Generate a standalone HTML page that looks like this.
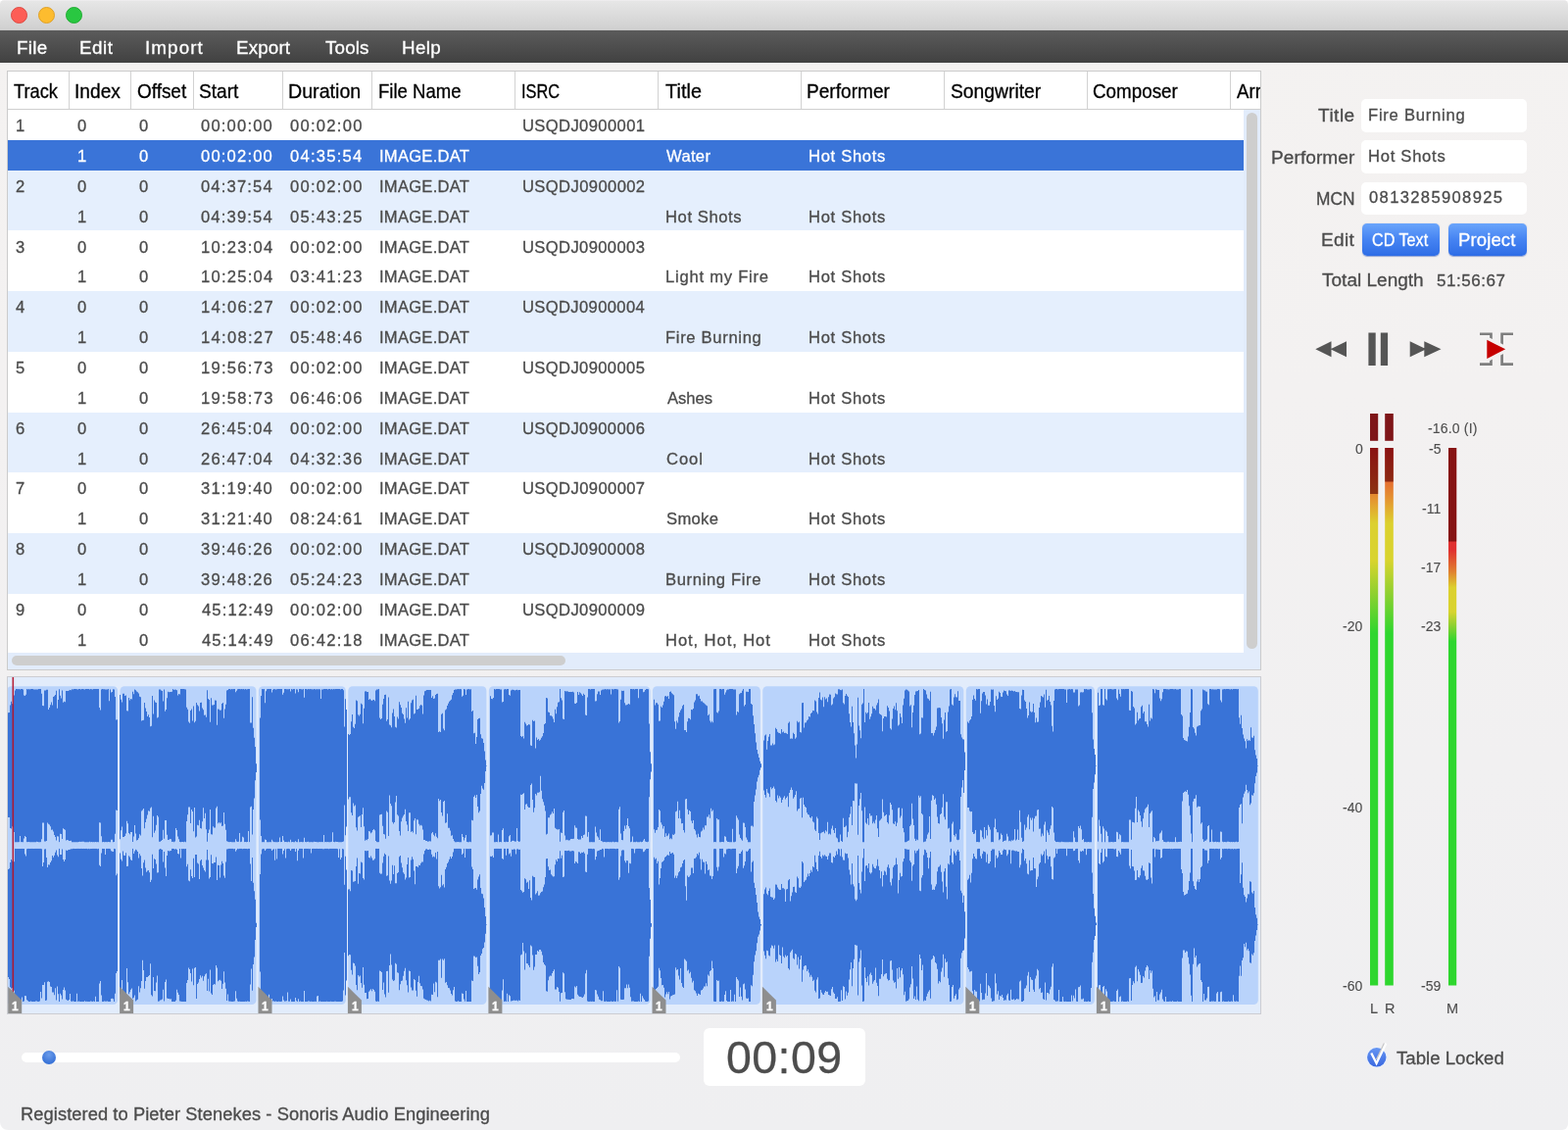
<!DOCTYPE html>
<html lang="en">
<head>
<meta charset="utf-8">
<title>Sonoris DDP Creator</title>
<style>
html,body{margin:0;padding:0;background:#fff;}
body{width:1600px;height:1153px;position:relative;overflow:hidden;font-family:"Liberation Sans",sans-serif;}
#win{will-change:transform;position:absolute;left:0;top:0;width:1600px;height:1153px;overflow:hidden;border-radius:4.5px 4.5px 6px 8px;background:linear-gradient(#f4f2f1 0,#f3f1f1 400px,#efeff1 1153px);}
#titlebar{position:absolute;left:0;top:0;width:1600px;height:31px;background:linear-gradient(#f1eff1 0,#e6e6e6 1.5px,#d0d0d0 30px,#c4c4c4 31px);}
.tl{position:absolute;top:7px;width:17px;height:17px;border-radius:50%;box-sizing:border-box;}
#menubar{position:absolute;left:0;top:31px;width:1600px;height:33px;background:linear-gradient(#5b5b5b,#414141);}
.t{position:absolute;white-space:nowrap;line-height:1;color:#4b4b4b;-webkit-text-stroke:0.3px currentColor;transform-origin:0 0;}
.m{color:#fff;}
.h{color:#000;}
.sel .t{color:#fff;}
.b{color:#fff;}
.k{color:#4e4e4e;-webkit-text-stroke:0.12px currentColor;}
.big{color:#4d4d4d;}
.f{color:#fff;font-weight:bold;}
#table{position:absolute;left:7px;top:72px;width:1280px;height:612px;box-sizing:border-box;border:1px solid #cbcbcb;background:#e2ecfb;overflow:hidden;}
#thead{position:absolute;left:0;top:0;width:1278px;height:38px;background:#fff;border-bottom:1px solid #cfcfcf;}
.hs{position:absolute;top:0;width:1px;height:38px;background:#d2d2d2;}
.row{position:absolute;left:0;width:1261px;background:#fff;}
.row.alt{background:#e5effd;}
.row.sel{background:#3a74d8;}
#vthumb{position:absolute;left:1264px;top:42px;width:10.5px;height:546.5px;border-radius:5.5px;background:#cecece;}
#hbar{position:absolute;left:0;top:593.4px;width:1278px;height:17px;background:#e2ecfb;}
#hthumb{position:absolute;left:4px;top:2.6px;width:565px;height:10.5px;border-radius:5.5px;background:#cecece;}
#wave{position:absolute;left:7px;top:690px;width:1280px;height:345px;box-sizing:border-box;border:1px solid #cccdd2;background:#e2ecfb;overflow:hidden;}
#wave svg{position:absolute;left:-1px;top:-1px;}
.inp{position:absolute;left:1389.3px;width:168.9px;height:33.5px;border-radius:5px;background:#fff;}
.btn{position:absolute;top:227.5px;height:33px;border-radius:5px;background:linear-gradient(#6aa5fb,#4583f2 50%,#2e6de6);box-shadow:0 0.5px 1px rgba(40,80,180,.5);}
#slider{position:absolute;left:21.5px;top:1073.75px;width:672.5px;height:10px;border-radius:5px;background:#fff;}
#knob{position:absolute;left:21.5px;top:-2px;width:14px;height:14px;border-radius:50%;background:radial-gradient(circle at 50% 30%,#6a9bea,#3a74d8 70%);}
#time{position:absolute;left:717.5px;top:1049.25px;width:165px;height:58.25px;border-radius:6px;background:#fff;}
svg.abs{position:absolute;left:0;top:0;}
</style>
</head>
<body>
<div id="win">
<div id="titlebar">
<i class="tl" style="left:11px;background:#fd5e56;border:1px solid #dd4a42"></i>
<i class="tl" style="left:39px;background:#fdbc2f;border:1px solid #dfa127"></i>
<i class="tl" style="left:67px;background:#29c741;border:1px solid #1fac31"></i>
</div>
<div id="menubar" role="menubar">
<span class="t m" role="menuitem" style="left:16.5px;top:9px;font-size:18.8px;letter-spacing:0.321px;transform:translateY(-0.4px) rotate(.001deg);">File</span>
<span class="t m" role="menuitem" style="left:80.7px;top:9px;font-size:18.8px;letter-spacing:0.576px;transform:translateY(-0.4px) rotate(.001deg);">Edit</span>
<span class="t m" role="menuitem" style="left:148.3px;top:9px;font-size:18.8px;letter-spacing:1.109px;transform:translateY(-0.4px) rotate(.001deg);">Import</span>
<span class="t m" role="menuitem" style="left:241px;top:9px;font-size:18.8px;letter-spacing:0.158px;transform:translateY(-0.4px) rotate(.001deg);">Export</span>
<span class="t m" role="menuitem" style="left:331.6px;top:9px;font-size:18.8px;letter-spacing:0.153px;transform:translateY(-0.4px) rotate(.001deg);">Tools</span>
<span class="t m" role="menuitem" style="left:410px;top:9px;font-size:18.8px;letter-spacing:0.364px;transform:translateY(-0.4px) rotate(.001deg);">Help</span>
</div>
<div id="table" role="table">
<div class="row" role="row" style="top:39px;height:30.86px">
<span class="t c" role="cell" style="left:8px;top:9px;font-size:16.6px;transform:translateY(0.2px) rotate(.001deg);">1</span>
<span class="t c" role="cell" style="left:70.9px;top:9px;font-size:16.6px;transform:translateY(0.2px) rotate(.001deg);">0</span>
<span class="t c" role="cell" style="left:133.9px;top:9px;font-size:16.6px;transform:translateY(0.2px) rotate(.001deg);">0</span>
<span class="t c" role="cell" style="left:197.4px;top:9px;font-size:16.6px;letter-spacing:1.174px;transform:translateY(0.2px) rotate(.001deg);">00:00:00</span>
<span class="t c" role="cell" style="left:288.4px;top:9px;font-size:16.6px;letter-spacing:1.259px;transform:translateY(0.2px) rotate(.001deg);">00:02:00</span>
<span class="t c" role="cell" style="left:524.9px;top:9px;font-size:16.6px;letter-spacing:0.377px;transform:translateY(0.2px) rotate(.001deg);">USQDJ0900001</span>
</div>
<div class="row sel" role="row" style="top:69.86px;height:30.86px">
<span class="t c" role="cell" style="left:71.2px;top:9.14px;font-size:16.6px;transform:translateY(0.05px) rotate(.001deg);">1</span>
<span class="t c" role="cell" style="left:133.9px;top:9.14px;font-size:16.6px;transform:translateY(0.05px) rotate(.001deg);">0</span>
<span class="t c" role="cell" style="left:197.4px;top:9.14px;font-size:16.6px;letter-spacing:1.174px;transform:translateY(0.05px) rotate(.001deg);">00:02:00</span>
<span class="t c" role="cell" style="left:288.4px;top:9.14px;font-size:16.6px;letter-spacing:1.231px;transform:translateY(0.05px) rotate(.001deg);">04:35:54</span>
<span class="t c" role="cell" style="left:378.7px;top:9.14px;font-size:16.6px;letter-spacing:0.233px;transform:translateY(0.05px) rotate(.001deg);">IMAGE.DAT</span>
<span class="t c" role="cell" style="left:671.85px;top:9.14px;font-size:16.6px;letter-spacing:0.330px;transform:translateY(0.05px) rotate(.001deg);">Water</span>
<span class="t c" role="cell" style="left:816.9px;top:9.14px;font-size:16.6px;letter-spacing:0.676px;transform:translateY(0.05px) rotate(.001deg);">Hot Shots</span>
</div>
<div class="row alt" role="row" style="top:100.72px;height:30.86px">
<span class="t c" role="cell" style="left:7.8px;top:9.28px;font-size:16.6px;transform:translateY(-0.1px) rotate(.001deg);">2</span>
<span class="t c" role="cell" style="left:70.9px;top:9.28px;font-size:16.6px;transform:translateY(-0.1px) rotate(.001deg);">0</span>
<span class="t c" role="cell" style="left:133.9px;top:9.28px;font-size:16.6px;transform:translateY(-0.1px) rotate(.001deg);">0</span>
<span class="t c" role="cell" style="left:197.4px;top:9.28px;font-size:16.6px;letter-spacing:1.145px;transform:translateY(-0.1px) rotate(.001deg);">04:37:54</span>
<span class="t c" role="cell" style="left:288.4px;top:9.28px;font-size:16.6px;letter-spacing:1.259px;transform:translateY(-0.1px) rotate(.001deg);">00:02:00</span>
<span class="t c" role="cell" style="left:378.7px;top:9.28px;font-size:16.6px;letter-spacing:0.233px;transform:translateY(-0.1px) rotate(.001deg);">IMAGE.DAT</span>
<span class="t c" role="cell" style="left:524.9px;top:9.28px;font-size:16.6px;letter-spacing:0.386px;transform:translateY(-0.1px) rotate(.001deg);">USQDJ0900002</span>
</div>
<div class="row alt" role="row" style="top:131.58px;height:30.86px">
<span class="t c" role="cell" style="left:71.2px;top:9.42px;font-size:16.6px;transform:translateY(-0.25px) rotate(.001deg);">1</span>
<span class="t c" role="cell" style="left:133.9px;top:9.42px;font-size:16.6px;transform:translateY(-0.25px) rotate(.001deg);">0</span>
<span class="t c" role="cell" style="left:197.4px;top:9.42px;font-size:16.6px;letter-spacing:1.145px;transform:translateY(-0.25px) rotate(.001deg);">04:39:54</span>
<span class="t c" role="cell" style="left:288.4px;top:9.42px;font-size:16.6px;letter-spacing:1.259px;transform:translateY(-0.25px) rotate(.001deg);">05:43:25</span>
<span class="t c" role="cell" style="left:378.7px;top:9.42px;font-size:16.6px;letter-spacing:0.233px;transform:translateY(-0.25px) rotate(.001deg);">IMAGE.DAT</span>
<span class="t c" role="cell" style="left:671.3px;top:9.42px;font-size:16.6px;letter-spacing:0.595px;transform:translateY(-0.25px) rotate(.001deg);">Hot Shots</span>
<span class="t c" role="cell" style="left:816.9px;top:9.42px;font-size:16.6px;letter-spacing:0.676px;transform:translateY(-0.25px) rotate(.001deg);">Hot Shots</span>
</div>
<div class="row" role="row" style="top:162.44px;height:30.86px">
<span class="t c" role="cell" style="left:8px;top:9.56px;font-size:16.6px;transform:translateY(-0.4px) rotate(.001deg);">3</span>
<span class="t c" role="cell" style="left:70.9px;top:9.56px;font-size:16.6px;transform:translateY(-0.4px) rotate(.001deg);">0</span>
<span class="t c" role="cell" style="left:133.9px;top:9.56px;font-size:16.6px;transform:translateY(-0.4px) rotate(.001deg);">0</span>
<span class="t c" role="cell" style="left:196.8px;top:9.56px;font-size:16.6px;letter-spacing:1.231px;transform:translateY(-0.4px) rotate(.001deg);">10:23:04</span>
<span class="t c" role="cell" style="left:288.4px;top:9.56px;font-size:16.6px;letter-spacing:1.259px;transform:translateY(-0.4px) rotate(.001deg);">00:02:00</span>
<span class="t c" role="cell" style="left:378.7px;top:9.56px;font-size:16.6px;letter-spacing:0.233px;transform:translateY(-0.4px) rotate(.001deg);">IMAGE.DAT</span>
<span class="t c" role="cell" style="left:524.9px;top:9.56px;font-size:16.6px;letter-spacing:0.368px;transform:translateY(-0.4px) rotate(.001deg);">USQDJ0900003</span>
</div>
<div class="row" role="row" style="top:193.3px;height:30.86px">
<span class="t c" role="cell" style="left:71.2px;top:8.7px;font-size:16.6px;transform:translateY(0.45px) rotate(.001deg);">1</span>
<span class="t c" role="cell" style="left:133.9px;top:8.7px;font-size:16.6px;transform:translateY(0.45px) rotate(.001deg);">0</span>
<span class="t c" role="cell" style="left:196.8px;top:8.7px;font-size:16.6px;letter-spacing:1.231px;transform:translateY(0.45px) rotate(.001deg);">10:25:04</span>
<span class="t c" role="cell" style="left:288.4px;top:8.7px;font-size:16.6px;letter-spacing:1.259px;transform:translateY(0.45px) rotate(.001deg);">03:41:23</span>
<span class="t c" role="cell" style="left:378.7px;top:8.7px;font-size:16.6px;letter-spacing:0.233px;transform:translateY(0.45px) rotate(.001deg);">IMAGE.DAT</span>
<span class="t c" role="cell" style="left:671.3px;top:8.7px;font-size:16.6px;letter-spacing:0.758px;transform:translateY(0.45px) rotate(.001deg);">Light my Fire</span>
<span class="t c" role="cell" style="left:816.9px;top:8.7px;font-size:16.6px;letter-spacing:0.676px;transform:translateY(0.45px) rotate(.001deg);">Hot Shots</span>
</div>
<div class="row alt" role="row" style="top:224.16px;height:30.86px">
<span class="t c" role="cell" style="left:8.3px;top:8.84px;font-size:16.6px;transform:translateY(0.3px) rotate(.001deg);">4</span>
<span class="t c" role="cell" style="left:70.9px;top:8.84px;font-size:16.6px;transform:translateY(0.3px) rotate(.001deg);">0</span>
<span class="t c" role="cell" style="left:133.9px;top:8.84px;font-size:16.6px;transform:translateY(0.3px) rotate(.001deg);">0</span>
<span class="t c" role="cell" style="left:196.8px;top:8.84px;font-size:16.6px;letter-spacing:1.288px;transform:translateY(0.3px) rotate(.001deg);">14:06:27</span>
<span class="t c" role="cell" style="left:288.4px;top:8.84px;font-size:16.6px;letter-spacing:1.259px;transform:translateY(0.3px) rotate(.001deg);">00:02:00</span>
<span class="t c" role="cell" style="left:378.7px;top:8.84px;font-size:16.6px;letter-spacing:0.233px;transform:translateY(0.3px) rotate(.001deg);">IMAGE.DAT</span>
<span class="t c" role="cell" style="left:524.9px;top:8.84px;font-size:16.6px;letter-spacing:0.350px;transform:translateY(0.3px) rotate(.001deg);">USQDJ0900004</span>
</div>
<div class="row alt" role="row" style="top:255.02px;height:30.86px">
<span class="t c" role="cell" style="left:71.2px;top:8.98px;font-size:16.6px;transform:translateY(0.15px) rotate(.001deg);">1</span>
<span class="t c" role="cell" style="left:133.9px;top:8.98px;font-size:16.6px;transform:translateY(0.15px) rotate(.001deg);">0</span>
<span class="t c" role="cell" style="left:196.8px;top:8.98px;font-size:16.6px;letter-spacing:1.288px;transform:translateY(0.15px) rotate(.001deg);">14:08:27</span>
<span class="t c" role="cell" style="left:288.4px;top:8.98px;font-size:16.6px;letter-spacing:1.259px;transform:translateY(0.15px) rotate(.001deg);">05:48:46</span>
<span class="t c" role="cell" style="left:378.7px;top:8.98px;font-size:16.6px;letter-spacing:0.233px;transform:translateY(0.15px) rotate(.001deg);">IMAGE.DAT</span>
<span class="t c" role="cell" style="left:671.3px;top:8.98px;font-size:16.6px;letter-spacing:0.674px;transform:translateY(0.15px) rotate(.001deg);">Fire Burning</span>
<span class="t c" role="cell" style="left:816.9px;top:8.98px;font-size:16.6px;letter-spacing:0.676px;transform:translateY(0.15px) rotate(.001deg);">Hot Shots</span>
</div>
<div class="row" role="row" style="top:285.88px;height:30.86px">
<span class="t c" role="cell" style="left:8px;top:9.12px;font-size:16.6px;transform:translateY(0px) rotate(.001deg);">5</span>
<span class="t c" role="cell" style="left:70.9px;top:9.12px;font-size:16.6px;transform:translateY(0px) rotate(.001deg);">0</span>
<span class="t c" role="cell" style="left:133.9px;top:9.12px;font-size:16.6px;transform:translateY(0px) rotate(.001deg);">0</span>
<span class="t c" role="cell" style="left:196.8px;top:9.12px;font-size:16.6px;letter-spacing:1.259px;transform:translateY(0px) rotate(.001deg);">19:56:73</span>
<span class="t c" role="cell" style="left:288.4px;top:9.12px;font-size:16.6px;letter-spacing:1.259px;transform:translateY(0px) rotate(.001deg);">00:02:00</span>
<span class="t c" role="cell" style="left:378.7px;top:9.12px;font-size:16.6px;letter-spacing:0.233px;transform:translateY(0px) rotate(.001deg);">IMAGE.DAT</span>
<span class="t c" role="cell" style="left:524.9px;top:9.12px;font-size:16.6px;letter-spacing:0.368px;transform:translateY(0px) rotate(.001deg);">USQDJ0900005</span>
</div>
<div class="row" role="row" style="top:316.74px;height:30.86px">
<span class="t c" role="cell" style="left:71.2px;top:9.26px;font-size:16.6px;transform:translateY(-0.15px) rotate(.001deg);">1</span>
<span class="t c" role="cell" style="left:133.9px;top:9.26px;font-size:16.6px;transform:translateY(-0.15px) rotate(.001deg);">0</span>
<span class="t c" role="cell" style="left:196.8px;top:9.26px;font-size:16.6px;letter-spacing:1.259px;transform:translateY(-0.15px) rotate(.001deg);">19:58:73</span>
<span class="t c" role="cell" style="left:288.4px;top:9.26px;font-size:16.6px;letter-spacing:1.259px;transform:translateY(-0.15px) rotate(.001deg);">06:46:06</span>
<span class="t c" role="cell" style="left:378.7px;top:9.26px;font-size:16.6px;letter-spacing:0.233px;transform:translateY(-0.15px) rotate(.001deg);">IMAGE.DAT</span>
<span class="t c" role="cell" style="left:672.6px;top:9.26px;font-size:16.6px;transform:translateY(-0.15px) rotate(.001deg) scaleX(0.9992);">Ashes</span>
<span class="t c" role="cell" style="left:816.9px;top:9.26px;font-size:16.6px;letter-spacing:0.676px;transform:translateY(-0.15px) rotate(.001deg);">Hot Shots</span>
</div>
<div class="row alt" role="row" style="top:347.6px;height:30.86px">
<span class="t c" role="cell" style="left:7.8px;top:9.4px;font-size:16.6px;transform:translateY(-0.3px) rotate(.001deg);">6</span>
<span class="t c" role="cell" style="left:70.9px;top:9.4px;font-size:16.6px;transform:translateY(-0.3px) rotate(.001deg);">0</span>
<span class="t c" role="cell" style="left:133.9px;top:9.4px;font-size:16.6px;transform:translateY(-0.3px) rotate(.001deg);">0</span>
<span class="t c" role="cell" style="left:197.2px;top:9.4px;font-size:16.6px;letter-spacing:1.174px;transform:translateY(-0.3px) rotate(.001deg);">26:45:04</span>
<span class="t c" role="cell" style="left:288.4px;top:9.4px;font-size:16.6px;letter-spacing:1.259px;transform:translateY(-0.3px) rotate(.001deg);">00:02:00</span>
<span class="t c" role="cell" style="left:378.7px;top:9.4px;font-size:16.6px;letter-spacing:0.233px;transform:translateY(-0.3px) rotate(.001deg);">IMAGE.DAT</span>
<span class="t c" role="cell" style="left:524.9px;top:9.4px;font-size:16.6px;letter-spacing:0.368px;transform:translateY(-0.3px) rotate(.001deg);">USQDJ0900006</span>
</div>
<div class="row alt" role="row" style="top:378.46px;height:30.86px">
<span class="t c" role="cell" style="left:71.2px;top:9.54px;font-size:16.6px;transform:translateY(-0.45px) rotate(.001deg);">1</span>
<span class="t c" role="cell" style="left:133.9px;top:9.54px;font-size:16.6px;transform:translateY(-0.45px) rotate(.001deg);">0</span>
<span class="t c" role="cell" style="left:197.2px;top:9.54px;font-size:16.6px;letter-spacing:1.174px;transform:translateY(-0.45px) rotate(.001deg);">26:47:04</span>
<span class="t c" role="cell" style="left:288.4px;top:9.54px;font-size:16.6px;letter-spacing:1.259px;transform:translateY(-0.45px) rotate(.001deg);">04:32:36</span>
<span class="t c" role="cell" style="left:378.7px;top:9.54px;font-size:16.6px;letter-spacing:0.233px;transform:translateY(-0.45px) rotate(.001deg);">IMAGE.DAT</span>
<span class="t c" role="cell" style="left:671.8px;top:9.54px;font-size:16.6px;letter-spacing:0.916px;transform:translateY(-0.45px) rotate(.001deg);">Cool</span>
<span class="t c" role="cell" style="left:816.9px;top:9.54px;font-size:16.6px;letter-spacing:0.676px;transform:translateY(-0.45px) rotate(.001deg);">Hot Shots</span>
</div>
<div class="row" role="row" style="top:409.32px;height:30.86px">
<span class="t c" role="cell" style="left:7.8px;top:8.68px;font-size:16.6px;transform:translateY(0.4px) rotate(.001deg);">7</span>
<span class="t c" role="cell" style="left:70.9px;top:8.68px;font-size:16.6px;transform:translateY(0.4px) rotate(.001deg);">0</span>
<span class="t c" role="cell" style="left:133.9px;top:8.68px;font-size:16.6px;transform:translateY(0.4px) rotate(.001deg);">0</span>
<span class="t c" role="cell" style="left:197.4px;top:8.68px;font-size:16.6px;letter-spacing:1.174px;transform:translateY(0.4px) rotate(.001deg);">31:19:40</span>
<span class="t c" role="cell" style="left:288.4px;top:8.68px;font-size:16.6px;letter-spacing:1.259px;transform:translateY(0.4px) rotate(.001deg);">00:02:00</span>
<span class="t c" role="cell" style="left:378.7px;top:8.68px;font-size:16.6px;letter-spacing:0.233px;transform:translateY(0.4px) rotate(.001deg);">IMAGE.DAT</span>
<span class="t c" role="cell" style="left:524.9px;top:8.68px;font-size:16.6px;letter-spacing:0.386px;transform:translateY(0.4px) rotate(.001deg);">USQDJ0900007</span>
</div>
<div class="row" role="row" style="top:440.18px;height:30.86px">
<span class="t c" role="cell" style="left:71.2px;top:8.82px;font-size:16.6px;transform:translateY(0.25px) rotate(.001deg);">1</span>
<span class="t c" role="cell" style="left:133.9px;top:8.82px;font-size:16.6px;transform:translateY(0.25px) rotate(.001deg);">0</span>
<span class="t c" role="cell" style="left:197.4px;top:8.82px;font-size:16.6px;letter-spacing:1.174px;transform:translateY(0.25px) rotate(.001deg);">31:21:40</span>
<span class="t c" role="cell" style="left:288.4px;top:8.82px;font-size:16.6px;letter-spacing:1.274px;transform:translateY(0.25px) rotate(.001deg);">08:24:61</span>
<span class="t c" role="cell" style="left:378.7px;top:8.82px;font-size:16.6px;letter-spacing:0.233px;transform:translateY(0.25px) rotate(.001deg);">IMAGE.DAT</span>
<span class="t c" role="cell" style="left:671.9px;top:8.82px;font-size:16.6px;letter-spacing:0.317px;transform:translateY(0.25px) rotate(.001deg);">Smoke</span>
<span class="t c" role="cell" style="left:816.9px;top:8.82px;font-size:16.6px;letter-spacing:0.676px;transform:translateY(0.25px) rotate(.001deg);">Hot Shots</span>
</div>
<div class="row alt" role="row" style="top:471.04px;height:30.86px">
<span class="t c" role="cell" style="left:7.9px;top:8.96px;font-size:16.6px;transform:translateY(0.1px) rotate(.001deg);">8</span>
<span class="t c" role="cell" style="left:70.9px;top:8.96px;font-size:16.6px;transform:translateY(0.1px) rotate(.001deg);">0</span>
<span class="t c" role="cell" style="left:133.9px;top:8.96px;font-size:16.6px;transform:translateY(0.1px) rotate(.001deg);">0</span>
<span class="t c" role="cell" style="left:197.4px;top:8.96px;font-size:16.6px;letter-spacing:1.174px;transform:translateY(0.1px) rotate(.001deg);">39:46:26</span>
<span class="t c" role="cell" style="left:288.4px;top:8.96px;font-size:16.6px;letter-spacing:1.259px;transform:translateY(0.1px) rotate(.001deg);">00:02:00</span>
<span class="t c" role="cell" style="left:378.7px;top:8.96px;font-size:16.6px;letter-spacing:0.233px;transform:translateY(0.1px) rotate(.001deg);">IMAGE.DAT</span>
<span class="t c" role="cell" style="left:524.9px;top:8.96px;font-size:16.6px;letter-spacing:0.368px;transform:translateY(0.1px) rotate(.001deg);">USQDJ0900008</span>
</div>
<div class="row alt" role="row" style="top:501.9px;height:30.86px">
<span class="t c" role="cell" style="left:71.2px;top:9.1px;font-size:16.6px;transform:translateY(-0.05px) rotate(.001deg);">1</span>
<span class="t c" role="cell" style="left:133.9px;top:9.1px;font-size:16.6px;transform:translateY(-0.05px) rotate(.001deg);">0</span>
<span class="t c" role="cell" style="left:197.4px;top:9.1px;font-size:16.6px;letter-spacing:1.174px;transform:translateY(-0.05px) rotate(.001deg);">39:48:26</span>
<span class="t c" role="cell" style="left:288.4px;top:9.1px;font-size:16.6px;letter-spacing:1.259px;transform:translateY(-0.05px) rotate(.001deg);">05:24:23</span>
<span class="t c" role="cell" style="left:378.7px;top:9.1px;font-size:16.6px;letter-spacing:0.233px;transform:translateY(-0.05px) rotate(.001deg);">IMAGE.DAT</span>
<span class="t c" role="cell" style="left:671.3px;top:9.1px;font-size:16.6px;letter-spacing:0.647px;transform:translateY(-0.05px) rotate(.001deg);">Burning Fire</span>
<span class="t c" role="cell" style="left:816.9px;top:9.1px;font-size:16.6px;letter-spacing:0.676px;transform:translateY(-0.05px) rotate(.001deg);">Hot Shots</span>
</div>
<div class="row" role="row" style="top:532.76px;height:30.86px">
<span class="t c" role="cell" style="left:7.9px;top:9.24px;font-size:16.6px;transform:translateY(-0.2px) rotate(.001deg);">9</span>
<span class="t c" role="cell" style="left:70.9px;top:9.24px;font-size:16.6px;transform:translateY(-0.2px) rotate(.001deg);">0</span>
<span class="t c" role="cell" style="left:133.9px;top:9.24px;font-size:16.6px;transform:translateY(-0.2px) rotate(.001deg);">0</span>
<span class="t c" role="cell" style="left:197.7px;top:9.24px;font-size:16.6px;letter-spacing:1.145px;transform:translateY(-0.2px) rotate(.001deg);">45:12:49</span>
<span class="t c" role="cell" style="left:288.4px;top:9.24px;font-size:16.6px;letter-spacing:1.259px;transform:translateY(-0.2px) rotate(.001deg);">00:02:00</span>
<span class="t c" role="cell" style="left:378.7px;top:9.24px;font-size:16.6px;letter-spacing:0.233px;transform:translateY(-0.2px) rotate(.001deg);">IMAGE.DAT</span>
<span class="t c" role="cell" style="left:524.9px;top:9.24px;font-size:16.6px;letter-spacing:0.377px;transform:translateY(-0.2px) rotate(.001deg);">USQDJ0900009</span>
</div>
<div class="row" role="row" style="top:563.62px;height:30.86px">
<span class="t c" role="cell" style="left:71.2px;top:9.38px;font-size:16.6px;transform:translateY(-0.35px) rotate(.001deg);">1</span>
<span class="t c" role="cell" style="left:133.9px;top:9.38px;font-size:16.6px;transform:translateY(-0.35px) rotate(.001deg);">0</span>
<span class="t c" role="cell" style="left:197.7px;top:9.38px;font-size:16.6px;letter-spacing:1.145px;transform:translateY(-0.35px) rotate(.001deg);">45:14:49</span>
<span class="t c" role="cell" style="left:288.4px;top:9.38px;font-size:16.6px;letter-spacing:1.259px;transform:translateY(-0.35px) rotate(.001deg);">06:42:18</span>
<span class="t c" role="cell" style="left:378.7px;top:9.38px;font-size:16.6px;letter-spacing:0.233px;transform:translateY(-0.35px) rotate(.001deg);">IMAGE.DAT</span>
<span class="t c" role="cell" style="left:671.3px;top:9.38px;font-size:16.6px;letter-spacing:0.914px;transform:translateY(-0.35px) rotate(.001deg);">Hot, Hot, Hot</span>
<span class="t c" role="cell" style="left:816.9px;top:9.38px;font-size:16.6px;letter-spacing:0.676px;transform:translateY(-0.35px) rotate(.001deg);">Hot Shots</span>
</div>
<div id="thead" role="row">
<i class="hs" style="left:62px"></i>
<i class="hs" style="left:125px"></i>
<i class="hs" style="left:189px"></i>
<i class="hs" style="left:280px"></i>
<i class="hs" style="left:371px"></i>
<i class="hs" style="left:517px"></i>
<i class="hs" style="left:663px"></i>
<i class="hs" style="left:809px"></i>
<i class="hs" style="left:955px"></i>
<i class="hs" style="left:1101px"></i>
<i class="hs" style="left:1247px"></i>
<span class="t h" role="columnheader" style="left:6.13px;top:11px;font-size:19.8px;transform:translateY(-0.4px) rotate(.001deg) scaleX(0.9233);">Track</span>
<span class="t h" role="columnheader" style="left:68.26px;top:11px;font-size:19.8px;transform:translateY(-0.4px) rotate(.001deg) scaleX(0.9691);">Index</span>
<span class="t h" role="columnheader" style="left:131.89px;top:11px;font-size:19.8px;transform:translateY(-0.4px) rotate(.001deg) scaleX(0.9571);">Offset</span>
<span class="t h" role="columnheader" style="left:195.48px;top:11px;font-size:19.8px;transform:translateY(-0.4px) rotate(.001deg) scaleX(0.9655);">Start</span>
<span class="t h" role="columnheader" style="left:285.91px;top:11px;font-size:19.8px;transform:translateY(-0.4px) rotate(.001deg) scaleX(0.9927);">Duration</span>
<span class="t h" role="columnheader" style="left:377.5px;top:11px;font-size:19.8px;transform:translateY(-0.4px) rotate(.001deg) scaleX(0.9367);">File Name</span>
<span class="t h" role="columnheader" style="left:523.51px;top:11px;font-size:19.8px;transform:translateY(-0.4px) rotate(.001deg) scaleX(0.8258);">ISRC</span>
<span class="t h" role="columnheader" style="left:670.85px;top:11px;font-size:19.8px;letter-spacing:0.073px;transform:translateY(-0.4px) rotate(.001deg);">Title</span>
<span class="t h" role="columnheader" style="left:815.45px;top:11px;font-size:19.8px;transform:translateY(-0.4px) rotate(.001deg) scaleX(0.9661);">Performer</span>
<span class="t h" role="columnheader" style="left:961.97px;top:11px;font-size:19.8px;transform:translateY(-0.4px) rotate(.001deg) scaleX(0.9755);">Songwriter</span>
<span class="t h" role="columnheader" style="left:1107.3px;top:11px;font-size:19.8px;transform:translateY(-0.4px) rotate(.001deg) scaleX(0.9512);">Composer</span>
<span class="t h" role="columnheader" style="left:1253.9px;top:11px;font-size:19.8px;transform:translateY(-0.4px) rotate(.001deg) scaleX(0.9434);">Arranger</span>
</div>
<div id="hbar"><div id="hthumb"></div></div>
<div id="vthumb"></div>
</div>
<div id="wave">
<svg width="1280" height="345" viewBox="7 690 1280 345">
<defs><clipPath id="wc"><rect x="5.00" y="703.1" width="115.00" height="156.3" rx="2.5"/><rect x="5.00" y="865.7" width="115.00" height="156.3" rx="2.5"/><rect x="122.00" y="703.1" width="140.00" height="156.3" rx="2.5"/><rect x="122.00" y="865.7" width="140.00" height="156.3" rx="2.5"/><rect x="265.00" y="703.1" width="89.00" height="156.3" rx="2.5"/><rect x="265.00" y="865.7" width="89.00" height="156.3" rx="2.5"/><rect x="355.00" y="703.1" width="142.00" height="156.3" rx="2.5"/><rect x="355.00" y="865.7" width="142.00" height="156.3" rx="2.5"/><rect x="500.00" y="703.1" width="165.00" height="156.3" rx="2.5"/><rect x="500.00" y="865.7" width="165.00" height="156.3" rx="2.5"/><rect x="667.00" y="703.1" width="110.00" height="156.3" rx="2.5"/><rect x="667.00" y="865.7" width="110.00" height="156.3" rx="2.5"/><rect x="779.00" y="703.1" width="206.00" height="156.3" rx="2.5"/><rect x="779.00" y="865.7" width="206.00" height="156.3" rx="2.5"/><rect x="987.00" y="703.1" width="132.00" height="156.3" rx="2.5"/><rect x="987.00" y="865.7" width="132.00" height="156.3" rx="2.5"/><rect x="1120.00" y="703.1" width="164.00" height="156.3" rx="2.5"/><rect x="1120.00" y="865.7" width="164.00" height="156.3" rx="2.5"/></clipPath></defs>
<g fill="#b9d3fb"><rect x="7.00" y="700.3" width="113.09" height="324.7" rx="4.5"/><rect x="122.51" y="700.3" width="138.95" height="324.7" rx="4.5"/><rect x="263.89" y="700.3" width="89.00" height="324.7" rx="4.5"/><rect x="355.30" y="700.3" width="141.12" height="324.7" rx="4.5"/><rect x="498.84" y="700.3" width="164.64" height="324.7" rx="4.5"/><rect x="665.90" y="700.3" width="109.95" height="324.7" rx="4.5"/><rect x="778.26" y="700.3" width="205.06" height="324.7" rx="4.5"/><rect x="985.74" y="700.3" width="131.17" height="324.7" rx="4.5"/><rect x="1119.33" y="700.3" width="164.47" height="324.7" rx="4.5"/></g>
<g fill="#3973d7" clip-path="url(#wc)"><path d="M8 781.2V727.3H9V727.1H10V719.6H11V715.8H12V718.1H13V718.6H14V709.4H15V704.5H16V703.1H17H18V703.2H19V703.1H20V703.6H21V703.1H22H23V703.4H24V709.5H25V710H26V708.7H27V703.1H28V703.5H29V703.1H30V703.4H31V703.1H32H33H34V703.6H35V703.5H36V703.4H37V703.6H38V703.4H39V703.1H40H41H42V707.8H43V720H44V720.3H45V704.5H46H47V703.7H48V703.8H49V724.1H50V722.1H51V719.2H52V716.5H53V719.5H54V710.9H55V710.2H56V708.9H57V704.7H58V722.7H59V713.9H60V703.3H61V709.7H62V712.4H63V704.4H64V716.7H65V715.8H66V716.3H67V705.1H68V705H69V704.9H70V704.5H71V703.9H72V704.3H73V703.3H74V703.5H75V703.1H76H77H78V703.3H79V703.4H80V703.1H81H82V703.4H83V703.1H84H85V703.2H86V703.4H87V703.1H88H89H90H91V703.4H92V703.1H93V703.2H94V703.5H95V703.1H96H97H98H99H100H101V721.9H102V724.4H103V703.5H104V703.1H105V703.3H106H107V703.6H108V703.4H109H110V703.1H111V715.2H112V703.4H113V706.4H114V706.1H115V703.3H116V703.5H117V710.9H118V734.5H119V734.3H120V827.1H119V826.5H118V850.7H117V859.1H116V859.4H115V856.7H114V856.8H113V859.4H112V859.3H111V858.9H110V859.4H109V859.3H108V859.2H107V859.4H106V859H105V859.4H104V853.3H103V839.5H102V839.2H101V859.4H100V859.2H99V859.4H98V858.9H97V859.4H96V859.3H95V859.4H94V859H93V859.4H92V858.7H91V859.4H90H89H88H87H86V858.8H85H84H83V858.9H82V858.8H81V858.9H80V859.4H79H78H77H76H75H74H73V857.8H72V858H71V857.9H70V857.2H69V857.1H68V857.6H67V846.8H66V845.9H65V845.2H64V856H63V851.1H62V850.7H61V859.2H60V853.6H59V853.3H58V857.6H57V854H56V851.9H55V848.4H54V846.6H53V846.8H52V843.2H51V841.5H50V840.7H49V839.6H48V858.1H47V858.5H46V858.6H45V839.4H44V839.5H43V856.2H42V859.3H41V859.4H40H39V859.1H38V858.8H37V859.4H36H35H34H33H32H31H30V859.1H29V859.3H28V859.2H27V853.9H26V852.9H25V855.5H24V859.4H23V859.2H22H21V853.1H20V859.2H19V859.4H18H17H16H15V849.1H14V844.1H13V843.3H12V845.4H11V845.1H10V833.9H9H8Z"/>
<path d="M8 943.9V886.9H9V886.2H10V879.9H11V877H12V878.5H13V876.9H14V879.2H15V865.8H16V866.1H17H18V866H19V865.9H20H21V866.1H22V865.7H23V865.9H24V866H25V871.6H26V873.6H27V866.2H28V865.7H29H30V866H31V865.7H32H33H34V866.1H35V865.7H36H37H38V865.8H39V865.7H40H41H42V866.2H43V883.9H44V879.9H45V866.4H46V866.3H47V875H48V885H49V882.2H50V882.6H51V880.1H52V878.3H53V873.1H54V874.7H55V872.8H56V869.7H57V867.5H58V872.5H59V874.3H60V865.7H61V872.1H62V872H63V866.4H64V876.9H65V878.9H66V876.9H67V867.5H68V867.9H69V867.3H70V867H71V866.7H72V866.3H73H74V865.7H75H76V866H77V866.1H78V865.7H79H80H81V866.1H82V865.7H83H84V866.1H85V865.7H86V865.9H87V865.7H88V865.8H89V866.2H90V865.7H91V866.3H92V866.1H93V865.9H94V865.7H95H96H97H98V865.8H99V866.2H100V865.8H101V882.8H102V884H103V870.4H104V865.7H105V865.9H106V866H107V872.1H108V865.7H109H110V865.8H111V865.7H112V866.3H113V868.3H114V868.7H115V869.1H116V865.7H117V866.2H118V893.3H119V891.6H120V991H119V992.9H118V1013.8H117V1021.9H116V1019.2H115V1018.8H114V1019.1H113V1022H112H111H110V1021.5H109V1021.8H108H107V1021.6H106V1022H105H104V1015.4H103V1001.1H102V1003.6H101V1022H100V1021.9H99V1022H98V1016.8H97V1022H96V1021.5H95V1022H94V1021.7H93V1021.4H92V1022H91H90H89V1021.7H88V1022H87V1021.3H86V1022H85H84H83H82H81V1021.5H80V1022H79V1013.8H78V1022H77H76H75V1021.3H74V1022H73V1021.5H72V1014H71V1020H70V1021.1H69V1020.4H68V1019.7H67V1010.5H66V1007.6H65V1010H64V1019.5H63V1015.6H62V1013.8H61V1022H60V1014.3H59V1006.6H58V1020.4H57V1008.3H56V1015.2H55V1012.4H54V1012.5H53V1007H52V1006.6H51V1002H50V1001.3H49V1001.8H48V1020.4H47V1021.1H46V1002.3H45V1005H44V1004.9H43V1018.6H42V1012H41V1021.4H40V1022H39H38V1021.5H37V1021.6H36V1022H35H34H33H32V1021.5H31V1022H30H29V1021.3H28V1020.3H27V1016.3H26V1015.9H25V1021.4H24V1022H23V1017.6H22V1021.6H21V1022H20H19H18V1021.5H17V1022H16V1021.5H15V1010.7H14V1008.5H13V1007.9H12V1008.5H11V1007.2H10V998.9H9V997H8Z"/>
<path d="M122 781.2V709.1H123V713.7H124V716.4H125V707.7H126V707.8H127V709.9H128V709.4H129V725.2H130V725.4H131V712H132V714.5H133V713.1H134V713.4H135V705.8H136V708.3H137V703.4H138V704.2H139V705.4H140V706.2H141V707.4H142V710.7H143V711.2H144V735.5H145V734.9H146V734.8H147V716.9H148V722.6H149V725.9H150V731H151V729.3H152V732.1H153V741.2H154V740.8H155V710.1H156V728.6H157V714.5H158V716.6H159V717.1H160V732.5H161V731.8H162V703.5H163V703.6H164V704.6H165V704.9H166V715.4H167V703.4H168V725.7H169V724H170V712.2H171V705.7H172V706.2H173V705.9H174V706H175V705.7H176V703.1H177V704H178V703.6H179V703.7H180V704.2H181V709.5H182V707.9H183V708.5H184V703.1H185H186H187H188V703.3H189V703.4H190V721.8H191V723.8H192V736.6H193V737.7H194V725.1H195V723.6H196V735.5H197V720.6H198V737.2H199V735.8H200V716.9H201V719.2H202V720.4H203V725.5H204V716.9H205V716.8H206V722.5H207V724.3H208V729.8H209V729.5H210V731.8H211V704.2H212V712.9H213V714H214V736.7H215V712.3H216V719.5H217V719.4H218V719H219V714.5H220V714.8H221V739.7H222V723.4H223V723.8H224V724.8H225V724.5H226V718H227V717.1H228V732.7H229V723.5H230V718.8H231V704.5H232V704H233V703.1H234H235V703.4H236V703.1H237V703.2H238V703.1H239H240V706.2H241V704.8H242V703.3H243V703.1H244H245V703.3H246V703.1H247V703.2H248V703.1H249V703.5H250V703.1H251V703.5H252V703.3H253V703.1H254H255V737.4H256H257V711.3H258V742.7H259V752.8H260V761.9H261V779.2H262V787.9H261V796.3H260V814.4H259V825.9H258V851.5H257V822.7H256V823.6H255V859.3H254V847.9H253V859H252V859.4H251V859.1H250V859.2H249V854.5H248V853.7H247V858.8H246V859.2H245V849.9H244V858.8H243V859.1H242V858.4H241V856.3H240V859.4H239H238H237H236V858.9H235V859.3H234V859.2H233V858.7H232V858.3H231V846.7H230V840.7H229V829.1H228V842.4H227V843.1H226V839.3H225V840.3H224V839.1H223V840.2H222V822.8H221V824.4H220V844.4H219V844.5H218V843.2H217V851.4H216V851.3H215V826H214V846.6H213V850.1H212V858.8H211V846.2H210V829.8H209V834.9H208V824.3H207V838.2H206V845.6H205V845.1H204V836.8H203V842.2H202V841.8H201V853.5H200V854.5H199V823.9H198V848.3H197V827.9H196V826H195V840.1H194V823.6H193H192V831.2H191V837.9H190V859.4H189V858.8H188V859.4H187V859H186V859.1H185V859.4H184V859.1H183V856.3H182V853.6H181V847H180V845.1H179V858.6H178V859.4H177V858.7H176V859H175V856.2H174V855.9H173V856.7H172V857H171V851.7H170V836.9H169V837H168V855.7H167V846.8H166V857.1H165V858.1H164V858.7H163H162V833.4H161V832H160V841.7H159V847.5H158V849.7H157V832.7H156V854.2H155V823.5H154V824.4H153V827.8H152V827.2H151V831.4H150V835.4H149V839.1H148V845.3H147V824.9H146V826.6H145V827.6H144V852.5H143V851.3H142V855.2H141V857H140V857.6H139V850.5H138V841.9H137V853.4H136V859.1H135V849H134H133V851.2H132V849.9H131V840.3H130V837.7H129V850.6H128V853H127V854.1H126H125V843.6H124V847.3H123V856.3H122Z"/>
<path d="M122 943.9V870.4H123V876.7H124V878.6H125V868.6H126V872.7H127V873.1H128V870.3H129V883.9H130V883.7H131V873.2H132V874.6H133V877.3H134V878H135V865.7H136V871.1H137V868.6H138V866.8H139V867.4H140V869H141V875.6H142V871.2H143V873.2H144V886.1H145V893.5H146V880.2H147V877.6H148V885.5H149V889.7H150V888.6H151V887.9H152V890.3H153V900H154V897.8H155V871.8H156V886.1H157V876.3H158V877.1H159V881.5H160V890.5H161V890.2H162V866.8H163V866.1H164V866.6H165V867H166V879.4H167V868.9H168V885.5H169V893.9H170V873H171V867.9H172V868.6H173V868.3H174V868H175V865.7H176V865.8H177V866H178V866.7H179V866H180V866.9H181V871H182V871.6H183V866.1H184V875.4H185V866.1H186V866.3H187V865.9H188V866.2H189V866H190V884.2H191V881.8H192V898.5H193V899.2H194V887.2H195V893.9H196V896.1H197V875.7H198V894.9H199V872.1H200V872H201V880.4H202V881.4H203V896.9H204V878.2H205V877H206V883.1H207V885.4H208V888.1H209V889.4H210V877.5H211V866.9H212V877.5H213V896.5H214V894.9H215V872.3H216V881.1H217V881.3H218V879.9H219V880H220V874.5H221V898.1H222V882.7H223V882.9H224V895.5H225V882.6H226V878.7H227V881.1H228V893.5H229V895.7H230V879.4H231V866.5H232V866.3H233V865.7H234H235H236H237H238V866.3H239V865.9H240V868.7H241V867.3H242V865.7H243V866.3H244V865.7H245H246H247V866.2H248V866.1H249V865.8H250V866H251H252V866.3H253V865.7H254H255V881.4H256V898.9H257V875.1H258V900.7H259V909.3H260V917.7H261V941.8H262V945.9H261V958.9H260V976.4H259V983.9H258V1010.8H257V988.6H256V1004.5H255V1022H254V1021.8H253V1021.4H252V1021.9H251V1021.7H250V1022H249H248H247H246H245V1021.8H244V1022H243V1021.4H242V1018.7H241V1011.3H240V1021.4H239V1021.8H238V1022H237H236V1021.7H235H234V1021.4H233V1014.4H232V1020.9H231V1008.8H230V1002.6H229V991.2H228V1003.8H227V1008.9H226V1000.8H225V999.8H224V1000.2H223V1001.2H222V987.6H221V984.9H220V1004.4H219V1004.1H218V1004.9H217V1015H216V1013.6H215V989.6H214V1011.5H213V998.8H212V1010.9H211V993.3H210V994.2H209V996.3H208V1000.7H207V995.8H206V997.4H205V995.3H204V998.9H203V1002.6H202V1003.9H201V1019.1H200V987H199V987.7H198V1005.2H197V988.6H196V1001.6H195V993.1H194V988.9H193V987.5H192V999.9H191V1002.9H190V1022H189H188H187H186V1021.9H185V1021.8H184V1021.6H183V1015H182V1012.7H181V1009.7H180V1020.8H179V1022H178V1021.9H177V1022H176H175V1019.2H174V1019.4H173V1019H172V1018.9H171V1018.4H170V999.4H169V1002.1H168V1021.4H167V1009.8H166V1019.4H165V1020.2H164V1020.6H163V1021.6H162V1021.7H161V995.4H160V1002.4H159V1011.3H158V1011H157V997.1H156V1016.4H155V1015.3H154V983.3H153V995.1H152V996H151V997.1H150V996.9H149V1001.1H148V1008.8H147V990H146V979.8H145V1001.1H144V1008.3H143V1012.5H142V1006.2H141V1019.7H140V1020.6H139V1021.5H138V1015.6H137V1017.7H136V1018.8H135V1008.4H134V1009.8H133V1012.3H132V1014.2H131V1002.3H130V988H129V1014.3H128V1017.5H127V1014.9H126V1019.1H125V1000H124V1013H123V1014.6H122Z"/>
<path d="M265 781.2V732.6H266V709.9H267V703.1H268V703.2H269V703.1H270V717.2H271V705.3H272V703.3H273V703.1H274H275H276H277V706.5H278V703.7H279V703.1H280V703.2H281V703.5H282V703.3H283V703.1H284H285H286H287H288V708.8H289V706.8H290V703.1H291H292V703.2H293H294H295V703.1H296V705.4H297V703.1H298V703.4H299V703.1H300H301V707.6H302V703.3H303V703.5H304V706.2H305V703.1H306H307V703.3H308V703.4H309V703.1H310V711.7H311V703.1H312H313V703.5H314V703.1H315V703.2H316V703.1H317V703.2H318V703.3H319V703.4H320V703.1H321V703.3H322V703.4H323V703.1H324V703.5H325V703.1H326V703.4H327V712.9H328V703.5H329V703.4H330V703.1H331H332H333H334V703.6H335V703.1H336H337V703.5H338V703.1H339V703.5H340V703.1H341V703.3H342V703.1H343H344H345H346H347V703.5H348V703.1H349H350V704.2H351V741.5H352V713.2H353V724H354V843.4H353V852.3H352V821.5H351V858.6H350V859H349V859.4H348H347H346H345V858.9H344V859H343V858.8H342V859.4H341V858.9H340V849.3H339V858.8H338V859.2H337V859.4H336H335V859.1H334V859.4H333V859.1H332V859.4H331V851.9H330V859.4H329V859H328V859.4H327V859.1H326V859.4H325H324H323V859.1H322V859H321V858.8H320V859.4H319H318V859.2H317V859.4H316H315V858.8H314V858.9H313V859.4H312V859.1H311V854.7H310V859.3H309V859.4H308V858.9H307V859.3H306V859.4H305V856.3H304V859.4H303V859.3H302V858.3H301V859.4H300H299V858.9H298V859.4H297V856.7H296V859.4H295V858.8H294V859.4H293V859.2H292V858.9H291V859.3H290V857.5H289V852.9H288V859.1H287V859.3H286V854.4H285V858.9H284V859.4H283H282H281V859.2H280V859.3H279V858.5H278V856.8H277V859.4H276V859.3H275V859.4H274H273H272V856.9H271V856.4H270V859.4H269V859.3H268V859.4H267V852.9H266V836.6H265Z"/>
<path d="M265 943.9V892H266V871.4H267V866.5H268V865.7H269V866.3H270V868.1H271V866.6H272V865.7H273H274H275H276V866.3H277V868.1H278V866.8H279V866.3H280V877.7H281V866.2H282V876.6H283V865.7H284H285H286H287H288V871.4H289V868H290V866.3H291V875.4H292V866.3H293V865.7H294H295V866.3H296V867.9H297V866.2H298V866H299V866.1H300V865.7H301V869.1H302V866.1H303V878.2H304V867.7H305V865.7H306H307H308V866.1H309V875.6H310V866H311V865.7H312H313V866H314V865.7H315V866.2H316V865.7H317V870.6H318V866.1H319V865.7H320H321V866.1H322V865.7H323H324V866.1H325H326V865.7H327V866H328V865.7H329V866.3H330H331V865.7H332H333H334H335V866.2H336V865.7H337H338H339H340V865.8H341V865.7H342V865.8H343V865.7H344V866.2H345V875H346V866.3H347V877.1H348V875H349V865.9H350V866.5H351V902.8H352V873.7H353V887.4H354V1000.5H353V1015.6H352V972H351V1010.4H350V1021.4H349V1022H348H347H346V1021.9H345V1022H344H343V1021.7H342V1021.8H341V1022H340H339H338V1021.8H337V1022H336H335V1021.9H334V1021.8H333V1022H332H331H330H329H328V1021.9H327V1021.4H326V1022H325V1015.9H324V1016.5H323V1022H322V1021.7H321V1021.9H320V1022H319H318V1021.8H317V1022H316V1021.4H315V1021.6H314V1022H313H312H311V1011H310V1021.9H309H308V1022H307V1021.5H306V1022H305V1019.2H304V1022H303V1021.3H302V1017.9H301V1022H300H299H298H297V1019.5H296V1021.7H295V1021.8H294V1012.6H293V1021.3H292V1021.4H291V1021.7H290V1020.6H289V1016.5H288V1021.7H287V1022H286H285V1021.8H284V1022H283H282V1021.6H281V1022H280V1021.4H279H278V1018.9H277V1021.9H276V1021.5H275V1014.7H274V1021.8H273V1022H272V1020.3H271V1019.9H270V1021.4H269V1021.7H268V1021H267V1016.9H266V991.4H265Z"/>
<path d="M355 781.2V748.9H356V750H357V749.1H358V736.3H359V729H360V741.8H361V743H362V738.8H363V714.6H364V715.2H365V729.2H366V730.4H367V728.7H368V717.7H369V718.7H370V738.2H371V722.7H372V705.5H373V705.2H374V705.9H375H376V713.9H377V713H378V714.3H379V715.1H380V714.2H381V714.1H382V715.2H383V704.5H384V703.5H385V703.6H386V703.1H387V732.5H388V734.1H389V733.1H390V718.8H391V712.9H392V709.1H393V708.7H394V735.8H395V734.1H396V711.4H397V739.6H398V740.2H399V742.2H400V727.5H401V723.4H402V731.1H403V741.8H404V742.6H405V731.6H406V733.5H407V716.3H408V719.2H409V722.1H410V727.8H411V728.9H412V733.4H413V737.7H414V722.3H415V732.6H416V715.8H417V734.5H418V733.3H419V717.3H420V714.6H421V713.8H422V728.5H423V727.8H424V709.7H425V723.9H426V723.8H427V723.1H428V720.3H429V719H430V719.7H431V728.6H432V709.6H433V705.3H434V704.8H435V704.1H436H437V704H438V703.9H439V704.1H440V712.1H441V710.3H442V713.1H443V712.6H444V708.9H445V708.1H446V707.7H447V746.9H448V746.3H449V747H450V728.8H451V727.7H452V743.6H453V745.3H454V724.4H455V723.5H456V720H457V717.7H458V715.8H459V714.7H460V713.7H461V709.2H462V706.9H463V704H464V703.5H465H466V703.3H467V703.1H468V703.2H469V703.1H470V703.2H471V710.8H472V709.8H473V703.1H474V703.4H475V709.1H476V703.5H477V703.3H478V703.1H479V703.5H480V703.3H481V725.9H482V725H483V748.3H484V747.7H485V759H486V752H487V733.9H488V732.9H489V732.7H490V749.3H491V753.3H492V753.8H493V758.1H494V766.6H495V775.4H496V781H497V781.5H496V787.1H495V799H494V805.7H493V804.4H492V801.8H491V810.1H490V827.6H489V829.2H488V823H487V810.9H486V813.9H485V811.5H484V812.9H483V837.2H482V836.8H481V859.4H480V858.7H479V859.4H478H477V858.9H476V852H475V854.7H474V857.6H473V854H472V850.9H471V859.4H470H469H468V859.1H467V859.3H466V859.4H465H464V858.3H463V856H462V852.2H461V852.8H460V847.6H459V844.8H458H457V830.2H456V839.3H455V839.7H454V816.9H453V818H452V832.6H451V829H450V816.1H449V817.2H448V815H447V855.2H446V853.7H445V850.3H444V853.2H443V851.7H442V849H441V850.3H440V858.4H439V858.2H438V858.6H437V858.8H436V858.1H435V857.9H434V857.1H433V856.9H432V846.6H431V842.4H430V841.8H429V842.6H428V840.7H427V836.4H426V836.2H425V851.2H424V834.9H423V837.2H422V849.6H421V847.9H420V849.1H419V829.2H418V829.3H417V847.9H416V841.6H415V837.9H414V825.8H413V830.9H412V832.5H411V834.6H410V838.2H409V852.4H408V848.1H407V832.5H406V831.2H405V812H404V818.4H403V839H402V840.6H401V838.8H400V822.2H399V820.1H398V811.6H397V853H396V828.8H395V827.6H394V855.7H393V851.4H392V851H391V842.8H390V830.7H389V831H388V831.5H387V859.2H386V859.4H385V859.3H384V858H383V847.2H382V845.9H381V846.9H380V849.3H379V850.2H378V848.4H377V848H376V856H375V857.2H374V856.7H373V857.8H372V843.2H371V824.2H370V831H369V844.1H368V832.3H367V832.9H366V833.8H365V847.4H364V844.3H363V821.4H362V822.6H361V819.4H360V832H359V829.2H358V813.3H357V813.2H356V815.5H355Z"/>
<path d="M355 943.9V907.4H356V907.3H357V909.3H358V888.1H359V888.6H360V899.7H361V899.4H362V899H363V884H364V875.5H365V901.7H366V890.9H367V891.4H368V879.5H369V880.2H370V895.9H371V897.4H372V868.1H373V868.2H374H375V868.1H376V875H377V875.6H378V873.4H379V875.6H380V877.7H381V877.5H382V876.2H383V865.7H384H385V865.9H386V865.8H387V890.7H388V891.7H389V891.5H390V880.4H391V873.8H392V870.8H393V872.1H394V893.8H395V893.3H396V873.5H397V898.6H398V901.7H399V898.5H400V882.8H401V892H402V883.2H403V901.2H404V901.3H405V890.9H406V890H407V874.2H408V873.1H409V880.6H410V885.3H411V890.2H412V891.8H413V897.4H414V895.6H415V882.1H416V875.1H417V895.4H418V894.9H419V877.5H420V874.3H421V876.8H422V888.4H423V902.3H424V883.9H425V884.1H426V885.1H427V882.7H428V882.9H429V880.7H430V879.4H431V879.5H432V871.6H433V868.1H434V866.4H435V866.2H436V867H437V866.9H438V866.5H439V867.1H440V871.7H441V874.6H442V873.7H443V874.6H444V870H445V876.6H446V868.9H447V904.2H448V906.5H449V905.2H450V892.7H451V903.6H452V902.2H453V905.5H454V886.9H455V884.7H456V881H457V879.6H458V876.8H459V873.9H460V875.9H461V874H462V869.4H463V865.8H464V865.7H465H466H467H468H469V865.8H470V866.3H471V872H472V870.7H473V865.7H474V875H475V865.8H476V866.3H477V866H478V866.3H479V865.8H480V866.1H481V884.6H482V887H483V906.9H484V906.2H485V906.1H486V907.8H487V897.6H488V894.6H489V892.2H490V906H491V911.7H492V912.3H493V916.5H494V926.1H495V934.9H496V943.6H497V944.1H496V952.8H495V961.6H494V967H493V968.3H492V973H491V974.9H490V992.1H489V993.9H488V985.7H487V976.6H486V977.1H485V975.8H484V975.6H483V1000.9H482V1000.6H481V1022H480H479H478H477H476V1011H475V1021.7H474V1019.6H473V1014H472V1013.6H471V1022H470H469H468V1021.3H467V1022H466V1021.9H465V1021.6H464V1006.9H463V1010.2H462V1015.5H461V1013.9H460V1010.5H459V1008.2H458V1008H457V1005.2H456V1002.1H455V1002.7H454V978.2H453V979.8H452V978.6H451V997.7H450V978.4H449V979.7H448H447V1017.2H446V1002.4H445V1001.7H444V1012.2H443V1003.6H442V1014.9H441V1014.8H440V1021.5H439V1020.7H438V1021.6H437V1020.8H436V1020.6H435V1020.1H434V1019.6H433V1018.8H432V1009.4H431V1006.2H430V1006H429V1003.2H428V995.7H427V1002.1H426V1016.8H425V1010.8H424V999.9H423V999H422V1010.5H421V1010.4H420V1007.6H419V991.1H418V990.6H417V1012.6H416V1005.3H415V1000.2H414V987.7H413V990.8H412V995.7H411V1000.4H410V1001H409V1004.3H408V1010.2H407V992.7H406V992.2H405V983.8H404V982.7H403V1000.3H402V1001H401V999.6H400V984.5H399V973.5H398V984.9H397V1012.8H396V990.8H395V991H394V1017.4H393V1014.6H392V1002.5H391V1010H390V991.9H389V990.9H388V990.5H387V1022H386V1021.4H385V1022H384V1021.5H383V1011.7H382V1010H381V1009H380V1011.3H379V1009.3H378V1010.6H377V1011.7H376V1019.1H375V1019.2H374V1013.1H373V1012.9H372V1004.8H371V987.1H370V1007.7H369V1002.9H368V995.6H367V996.5H366V995H365V1010.2H364V1005.1H363V985.4H362V982.9H361V982.4H360V994.5H359V989.7H358V974.2H357V974.1H356V975.3H355Z"/>
<path d="M500 781.2V710.2H501V712.9H502V713.2H503V712.1H504V703.1H505V703.4H506V703.1H507H508H509H510V703.5H511V703.6H512V716.5H513V716.1H514V703.5H515V703.1H516V703.5H517V703.1H518H519V709.1H520V709.8H521V704.6H522V703.7H523H524V704H525V704.5H526V704.1H527V703.8H528V704.2H529V704.1H530V704H531V750.9H532V752.1H533V750.9H534V753.5H535V736.8H536V738.4H537V740.4H538V740.1H539V738.9H540V739.5H541V760.5H542V761.1H543V734.8H544V736H545V735.4H546V763.6H547V752.5H548V755H549V754H550V755.8H551V754.7H552V752.8H553V751.3H554V748.1H555V739H556V738H557V712H558V712.4H559V726.4H560V726.9H561V730.3H562V730.2H563V731.2H564V733.6H565V736.9H566V723.7H567V728.3H568V721.2H569V716.8H570V716.3H571V703.1H572V712.2H573V714.6H574V733.6H575V734.1H576V705.1H577V705.4H578V705.3H579V705.4H580V706.1H581V705.9H582V706.1H583V706H584V705.7H585V706.4H586V717.8H587V718.1H588V717.1H589V706.1H590V708.9H591V706.3H592V707.3H593V708.6H594V710H595V707.8H596V708.9H597V729.6H598V729.9H599V711.6H600V703.1H601H602V703.6H603V703.1H604H605H606H607V715.6H608V715.2H609V708.2H610V705.4H611H612V709.1H613V704.4H614V703.7H615V703.5H616V703.4H617V703.1H618V703.4H619V703.2H620V703.3H621V703.6H622V703.2H623V708.4H624V703.1H625V703.6H626V703.3H627V703.1H628H629V703.2H630V703.4H631V737.6H632V735.9H633V713.7H634V704.8H635V705H636V704.8H637V717.2H638V719.5H639V719.2H640V718.7H641V718.1H642V718.8H643V703.1H644H645V703.3H646V703.1H647V703.4H648V703.1H649H650H651V712.2H652V703.2H653V703.1H654H655H656V706.3H657V705.7H658V704.1H659V703.1H660H661V703.3H662V738.6H663V767.3H664V779.3H665V787.4H664V795.2H663V813.2H662V858.8H661V859.4H660V858.9H659V858.6H658V856.1H657V857.6H656V859H655V859.4H654V858.8H653V859.4H652H651H650V858.8H649V859.4H648V859.2H647V859.4H646V853.6H645V858.8H644V859.4H643V845.3H642V843.1H641V835H640V841.9H639V845.7H638V842.6H637V848.1H636V857.3H635V857.1H634V850.5H633V823.2H632V825.8H631V859.4H630H629V858.9H628V859.4H627H626V858.8H625V859.4H624H623V859.2H622V859.4H621V859H620V859.4H619H618V859.3H617V858.9H616V859.4H615V858.5H614V857.9H613V846.3H612V857H611V854.4H610V853.2H609V849.5H608V843.6H607V859.4H606H605H604V859.3H603V859.4H602H601V848.9H600V853.7H599V832.8H598V832.4H597V851.5H596V851.9H595V854.9H594V852.9H593V856.6H592V856.4H591V856.7H590V856.1H589V844.8H588V844.5H587V842.3H586V855.8H585V855.9H584V856H583V856.1H582V857.3H581V857.4H580V857.2H579V856.8H578V857.2H577V852.5H576V826.9H575V828.7H574V850.1H573V849.5H572V858.8H571V846H570V846.4H569V846.3H568V845.7H567V844.8H566V824.9H565V830.1H564V828.3H563V830.4H562V831.4H561V834.3H560H559V850.7H558V851.5H557V827.5H556V821.7H555V818.3H554V815.2H553V806.8H552V791.7H551V808.3H550V808.7H549H548V811.4H547V810H546V824.2H545V828.7H544V816.1H543V799.5H542V801.1H541V824.1H540H539V822.7H538V820.3H537V820.8H536V826.1H535V809.2H534V810.1H533V811H532V810.7H531V858.5H530V859H529V858H528V845H527V858.6H526V858.8H525V858H524V857.8H523V858.1H522V859.1H521V851.9H520V853.2H519V858.9H518V859.3H517V858.8H516V859.4H515V859H514V845.3H513V846.9H512V859.4H511V858.9H510V859.4H509V851.5H508V859.4H507V859.1H506V859.4H505H504V849.4H503V849.6H502V852.3H501V852.6H500Z"/>
<path d="M500 943.9V873.7H501V874H502V873.3H503V874.9H504V866H505V865.7H506H507H508H509V866.1H510V865.7H511H512V876.1H513V876.7H514V865.7H515H516V872.7H517V865.7H518H519V871.4H520V870.6H521V873.8H522V866.7H523V866.9H524V866.2H525V866.7H526V871.4H527V866.5H528V866.3H529V866.9H530V866.7H531V908H532V909.2H533V910.8H534V909.9H535V896.3H536V897.3H537V900.7H538V899.8H539V907H540V898.2H541V915.9H542V918.6H543V893.8H544V894.7H545V894.9H546V912.4H547V911.3H548V909.3H549V913.7H550V913.6H551V911.2H552V910.1H553V909.5H554V905.3H555V902.6H556V895H557V876.3H558V876.1H559V884.3H560V888.1H561V887.5H562V892.3H563V893.4H564V894.5H565V894.3H566V882.2H567V877.3H568V879.1H569V875.9H570V876.2H571V868.2H572V875.8H573V872.7H574V894.9H575V894.4H576V868H577V867.9H578V868.3H579V867.9H580V867.8H581V868.5H582V868.6H583V868.3H584V868.1H585V868.4H586V880.9H587V879H588V879.8H589V881.1H590V869.2H591V869.6H592V871.1H593V869.8H594V869.9H595V869.3H596V870.7H597V889.4H598V890.1H599V871.8H600V865.7H601H602V865.8H603V865.7H604V866.2H605V865.7H606V866.3H607V877.3H608V873.9H609V868.6H610V868H611V867.8H612V866.9H613H614V865.8H615V866.2H616V874.5H617V865.7H618H619H620V866.1H621V866.3H622V865.8H623V865.7H624H625H626H627V866H628V866.3H629V865.7H630V866H631V897.7H632V895.2H633V873.4H634V867.8H635V867.3H636V867.4H637V878.3H638V880.3H639V878H640V878.3H641V890.7H642V880.8H643V881.2H644V865.7H645H646V866.3H647V870.4H648V866.3H649V865.7H650H651H652H653V866.1H654V866.3H655H656V869.3H657V868.8H658V867.2H659V866.1H660V866H661V865.7H662V906.1H663V918.1H664V941.9H665V945.8H664V957.8H663V975.7H662V1021.4H661V1022H660H659V1021.8H658V1019.9H657V1018.6H656V1016.2H655V1022H654V1013.8H653V1022H652V1021.6H651V1022H650H649H648H647V1021.4H646V1021.5H645V1021.8H644V1017.3H643V1007.8H642V1004.6H641V1008.2H640V1004.5H639V1008.2H638V1008.3H637V1019.7H636V1020H635H634V1019.8H633V987.6H632V986.1H631V1021.8H630V1010.2H629V1021.8H628V1022H627V1021.5H626V1022H625H624V1021.6H623V1022H622H621H620V1021.9H619V1021.6H618V1022H617V1021.8H616V1011.2H615V1021.3H614H613V1020.2H612V1019.8H611V1016.8H610V1014.5H609V1010.4H608V1009.9H607V1021.9H606V1022H605V1021.8H604V1022H603V1021.8H602V1021.9H601V1022H600V1021.5H599V989.8H598V993.3H597V1014.4H596V1016.8H595V1018H594V1017.5H593V1017.1H592V1017H591V1016.2H590V1014.7H589V1006H588V1007.6H587V1006.4H586V1019.3H585V1018.9H584H583V1019.9H582H581V1020.1H580V1019.7H579H578V1019.2H577V1012.3H576V993.2H575V992.2H574V1013.1H573V1013.3H572V1021.7H571V1011.9H570V1007.8H569V1006.9H568V1009.6H567V1009.4H566V989.2H565V990.9H564V993H563V995.7H562V995.5H561V996.4H560V1000.2H559V1011.8H558V1011.2H557V985.2H556V984H555V981.9H554V974.5H553V970.8H552V968.9H551H550V971.1H549V969.9H548V973.9H547H546V986.6H545V989.8H544V974.5H543V965.4H542V964.4H541V987H540V985H539V983.3H538V983.1H537V972.5H536V989.6H535V970.5H534V961.9H533V973.7H532V974.4H531V1020.9H530V1020.4H529V1021.4H528V1020.8H527V1020.7H526V1021H525V1020.5H524V1021H523V1021.2H522V1021.4H521V1016.3H520V1015.3H519V1021.9H518V1013.8H517V1022H516V1021.5H515V1022H514V999.2H513V1010.4H512V1021.7H511V1022H510H509H508V1021.8H507V1021.7H506V1022H505H504V1012.7H503V1014.2H502V1013.2H501V1015H500Z"/>
<path d="M667 781.2V713.7H668V719.4H669V717.2H670H671V718.7H672V735.7H673V735.4H674V720.7H675V721.9H676V719.5H677V715.8H678V710.6H679V710H680V711H681V709.9H682V713H683V705.9H684V705.6H685V707.3H686V708.2H687V709.2H688V736.3H689V743.8H690V735.6H691V737.5H692V731.5H693V727H694V724.8H695V723.2H696V720.3H697V719H698V745H699V744.9H700V747H701V736.3H702V732.7H703V733H704V734.2H705V724H706V724.3H707V722.9H708V716.5H709V714.6H710V708.2H711V708.3H712V710.2H713V709.7H714V713H715V715.6H716V715.4H717V716.8H718V717.4H719V718.4H720V719.5H721V720.3H722V729.9H723V728.8H724V735.6H725V737.2H726V735.8H727V737.3H728V703.2H729V703.1H730H731V726.7H732V727.4H733V725.6H734V703.1H735H736V703.6H737V703.1H738H739V708.7H740V706.6H741V704.3H742V703.5H743H744V703.1H745H746H747H748V703.4H749H750V703.5H751V729.5H752V725.9H753V726.7H754V708.3H755V707.2H756V706.9H757V704.8H758V703.1H759V720.6H760V719H761V705.8H762H763V706H764V703.1H765H766V718.1H767V719.1H768V730.2H769V739H770V748.3H771V757.6H772V765H773V769.3H774V773H775V776.8H776V779.2H777V783.3H776V785.7H775V790.8H774V793.2H773V797.5H772V805.5H771V811.6H770V818.1H769V843.4H768V842.5H767V842.8H766V859.4H765H764H763V856.7H762V854.6H761V844H760V839.8H759V839.4H758V857.7H757V856.6H756V854.9H755V851.4H754V836.4H753V834.4H752V832.2H751V858.7H750V859.4H749H748V845.7H747V859.4H746H745H744V859H743H742V857.7H741V853.8H740V853.3H739V859.4H738V859H737V858.9H736V859.4H735H734V836.2H733V836.3H732V834.9H731V859.4H730V859.1H729V859.4H728V826.6H727V827.7H726V824.7H725V834.7H724V831.2H723V833.4H722V833.6H721V842.2H720V842.3H719V846.6H718V844.4H717V847.4H716V848.6H715V854.3H714V854.1H713V850.7H712V854.5H711V851.5H710V847.4H709V846.1H708V836.9H707V840H706V837.5H705V828.1H704V827.1H703V831.1H702V825.8H701V814.9H700V815.4H699V849.5H698V846.9H697V840.1H696V840.2H695V835.3H694V826.8H693V835H692V817.8H691V827.6H690V828.3H689V850.7H688V852.1H687V851.6H686V856.3H685V855.3H684V856.3H683V850.6H682V852.5H681V853.3H680V850.3H679V854.1H678V843H677V845.5H676V841.5H675V839.3H674V827.2H673V826.1H672V844.1H671V846.8H670V846.9H669V849.7H668V846.3H667Z"/>
<path d="M667 943.9V874.7H668V876.7H669V875.8H670V881H671V878.7H672V902.4H673V896H674V885.9H675V879.7H676V879H677V877.7H678V874.7H679V874.1H680V872.7H681V872.3H682V872.9H683V868.9H684V871.1H685V870.5H686V870H687V871.8H688V895.7H689V893.5H690V895.9H691V893.5H692V890.2H693V889H694V885.3H695V884.4H696V880.9H697V877.9H698V876.9H699V904.3H700V918.7H701V893.6H702V895H703V894.6H704V892.7H705V885.5H706V885.6H707V891H708V875.9H709V875.8H710V874.5H711V871H712V872.6H713V869.7H714V876.4H715V887.5H716V876.7H717V879.6H718V879.7H719V891.6H720V879.1H721V881.8H722V888.1H723V887.3H724V893.6H725V893.7H726V897H727V894H728V866.2H729V865.7H730V866.2H731V884.7H732V888.5H733V884.5H734V865.7H735V866.1H736V865.7H737H738V874.5H739V870.7H740V871.5H741V866.5H742V866.2H743V865.7H744V866H745V866.2H746V866.3H747V865.7H748H749H750V865.8H751V891H752V886.3H753V883.7H754V871H755V871.1H756V869H757V867.4H758V885.7H759V883.3H760V879.1H761V868.5H762V869H763V867.8H764V866.3H765V865.7H766V889.6H767V879.7H768V878.5H769V900.8H770V905.9H771V913.1H772V921H773V930.6H774V935.6H775V938.1H776V943.1H777V944.6H776V949.6H775V953.4H774V955.8H773V962.3H772V970.3H771V974.5H770V981.3H769V994.7H768V1006.3H767V1005.2H766V1022H765H764V1018.5H763V1019H762V1018.6H761V1009.4H760V1003.5H759V1004.3H758V1020.6H757V1016.7H756V1007.6H755V1016.9H754V1000.5H753V999H752V997.1H751V1022H750V1014.7H749V1021.7H748V1021.5H747V1021.9H746V1010H745V1022H744H743H742V1021H741V1011.3H740V1014.9H739V1021.7H738V1022H737V1021.4H736V1022H735H734V1000.6H733V1001.1H732V1000.1H731V1022H730H729V1021.8H728V987.9H727V980.5H726V989.9H725V991H724V995.7H723V994.4H722V1006.2H721V1003.2H720V1006.5H719V1006.4H718V1008.4H717V1010.1H716V1010.5H715V1014.9H714V1014.2H713V1013.8H712V1015.9H711V1013.6H710V1011.2H709V1010.3H708V1000.8H707V1002.6H706V997.7H705V991.7H704V993.2H703V989.4H702V990.5H701V980.7H700V979.6H699V978.4H698V1008H697V1006.7H696V1002.9H695V988.1H694V999.4H693V995.5H692V988.9H691V989.7H690V987.2H689V1014.5H688V1015H687V1015.3H686V1015.9H685V1016.4H684V1019.6H683V1011.9H682V1014.2H681V1012.3H680V1014.4H679V1017.6H678V1007.8H677V1005H676V1005.3H675V998H674V990.2H673V987.8H672V1006.8H671V1008H670V1009.1H669V1011.5H668V1009.7H667Z"/>
<path d="M779 781.2V755.5H780V750.6H781V749.6H782V764.7H783V756H784V751.8H785V749H786V760.4H787H788V758.5H789V760.2H790V759.6H791V742.8H792V744H793V746.7H794V747.7H795V748H796V748.7H797V744H798V747.2H799V746.6H800V747.9H801V747.7H802V748.3H803V748.9H804V737.7H805V736.4H806V753.8H807V753.5H808V753.8H809V747.7H810V749H811V753.7H812V752.6H813V735.8H814V737.3H815V736.5H816V746.9H817V747.5H818V717.3H819V716.9H820V742.6H821V737.6H822V737.3H823V735.2H824V734.3H825V731H826V731.4H827V728H828V727H829V725H830V725.3H831V714.6H832V715.4H833V726.6H834V728.6H835V712.1H836V706.4H837V713.8H838V714.4H839V711.6H840V721.2H841V711.2H842V713.5H843V712.6H844V716.2H845V711.2H846V708.6H847V708.8H848V719.5H849V718.5H850V712.5H851V711.3H852V707.5H853V708.2H854V708.5H855V703.3H856H857V704H858V704.3H859V703.5H860V717.3H861V718.5H862V710.1H863V708H864V709.7H865V711H866V728.2H867V736.9H868V741.4H869V720.7H870V737.1H871V748.3H872V760.6H873V773.4H874V759.6H875V711.7H876V740.5H877V745.2H878V753.2H879V718.8H880V717.4H881V703.1H882V736.9H883V726.7H884V728.3H885V727H886V717H887V733.8H888V731.3H889V728.2H890V720.7H891V722.8H892V723.1H893V724.6H894V719.6H895V717.2H896V713.4H897V728.3H898V729H899V729.7H900V746.3H901V733.1H902V731H903H904V731.5H905V720.2H906V722H907V725.5H908V743.3H909V744.6H910V733.5H911V722.9H912V720.6H913V724.2H914V717.2H915V725.3H916V740.4H917V739.5H918V728.1H919V731.8H920V738H921V719.6H922V712.7H923V704.6H924V703.4H925V703.8H926V704.4H927V705.4H928V720.5H929V719.3H930V742.3H931V726.9H932V719.8H933V709.1H934V705.5H935V705.3H936V705H937V704.1H938V749.3H939V748.5H940V732.2H941V732.6H942V703.1H943V703.9H944V704.6H945V708.4H946V712.5H947V713.2H948V714.7H949V705.8H950V748.1H951H952V750.6H953V747.7H954V744.9H955V741.6H956V722.4H957V722.2H958V722H959V722.5H960V732.1H961V738.3H962V753.7H963V734.4H964V727H965V746.7H966V746.1H967V726.6H968V720.4H969V703.5H970V703.1H971V718.8H972V719.7H973V711.4H974V708.3H975V711.3H976V711.4H977V705.2H978V714.9H979V715H980V749.3H981V752.4H982V754.2H983V754.6H984V767.6H985V786.1H984V808.9H983V795.9H982V803.6H981V813.1H980V846.2H979V856.7H978V857.2H977V856.8H976V850.8H975V853.5H974V852H973V838.5H972V840.5H971V858.8H970V859.4H969V844.8H968V845.5H967V818.3H966V818.2H965V836.3H964V833.4H963V810.3H962V823.8H961V829.9H960V831.1H959V840.5H958V839.9H957V833.5H956V820.8H955V814.4H954V816H953V811.9H952V811.2H951V816.7H950V855.9H949V833.1H948V849.5H947V851.5H946V855.7H945V858.4H944V858.8H943V859.4H942V831.3H941V830.1H940V812.2H939V813.8H938V811.8H937V857.2H936V856.5H935V858H934V855.7H933V841.9H932V835.4H931V819.7H930V841.4H929V842.9H928V857.4H927V858H926V858.8H925V859.4H924H923V849.2H922V844.9H921V824.8H920V832.4H919V834.6H918V824H917V824.6H916V839.6H915V843H914V838.2H913V840.9H912V840.2H911V826.3H910V821.1H909V819H908V831.7H907V840.6H906V838.9H905V831.1H904V831.9H903V832.7H902V828.8H901V815.5H900V835.3H899V836.5H898V837.5H897V854H896V845.3H895V831.9H894V836.5H893V840.2H892V838.5H891V840.2H890V832.2H889V832.6H888V829.9H887V841.7H886V835.1H885V840.8H884V839.5H883V823.5H882V859.4H881H880V827.3H879V809.1H878V815.3H877V822.1H876V851.7H875V799.5H874H873V799.3H872V817.2H871V816.9H870V842H869V823H868V830.6H867V834H866V848.7H865V854.3H864V842.5H863V843.5H862V844.1H861V834.8H860V858.9H859V858.1H858V851.5H857V859.4H856H855V855.4H854V854.5H853V844.9H852V850H851V846.9H850V842.4H849V845.5H848V851.6H847V850.4H846V851.3H845V838.8H844V848.6H843V847.3H842V850.2H841V848.6H840V848.9H839V849.4H838V850.3H837V856.9H836V850H835V835.2H834V833.4H833V847.9H832V846.5H831V839.3H830V838.2H829V833.1H828V834.7H827V834.1H826V831.6H825V831H824V829.3H823V824H822V823.1H821V820.9H820V813.7H819V834.2H818V813.9H817V814.8H816V825.1H815V825.4H814V827.5H813V807.2H812V810.9H811V813.3H810V814.8H809V806H808V803.6H807V806H806V808.9H805V823.3H804V812.6H803V814H802V815.4H801V812.3H800V813.7H799V816.1H798V819H797V813.7H796V812.3H795V814.6H794V811.4H793V818.6H792V817.1H791V804.7H790V802.6H789V804H788V805.2H787V803.3H786V813.2H785V809.7H784V808.8H783V805.1H782V813.7H781V811H780V806.6H779Z"/>
<path d="M779 943.9V912.3H780V907.4H781V905.5H782V911.7H783V913.2H784V909.1H785V906.4H786V914.9H787V915.6H788V915.8H789V918H790V916.4H791V902.4H792V902.7H793V905.4H794V907.2H795V908.1H796H797V902.1H798V906.2H799H800V907.3H801V920.1H802V907.4H803V907H804V898.3H805V897.1H806V919.6H807V914.2H808V910.6H809V905H810V904.7H811V910.3H812V910.9H813V894.6H814V896.3H815V905.4H816V906H817V904.6H818V878.9H819V880.4H820V899.9H821V898.6H822V897.7H823V894.7H824V891.4H825V893.9H826V891H827V887.8H828V889.7H829V884.1H830V884.9H831V872.7H832V879.8H833V887H834V888.9H835V872.9H836V868.8H837V874.1H838V875.8H839V872.6H840V873.5H841V872.3H842V873.5H843V874.1H844V877H845V873.2H846V870.4H847V870.6H848V880H849V880.4H850V873.9H851V875.1H852V872.9H853V868.5H854V871.8H855V865.7H856V866.4H857V873.5H858V866.2H859V874.4H860V877.4H861V877.7H862V870.6H863V871.3H864V871H865V875.5H866V887.4H867V892.6H868V902.6H869V880.9H870V902.2H871V904.6H872V917.6H873V919.2H874V917.7H875V873H876V900.9H877V907.7H878V911.5H879V889.5H880V875.5H881V865.7H882V898.9H883V883.6H884V882.9H885V885.7H886V881.1H887V890.3H888V891.5H889V890.3H890V881.7H891V884.5H892V886H893V886.2H894V883.6H895V876.8H896V883.7H897V888.1H898V896.2H899V889.3H900V904.5H901V892.9H902V888.4H903V889.4H904V892.7H905V884.7H906V882.3H907V885.7H908V900.3H909V903.5H910V896.6H911V884.7H912V883H913V882.2H914V875.5H915V882.1H916V911.6H917V897.9H918V890.8H919V894.4H920V894.1H921V879.3H922V875.9H923V866H924V866.5H925V866.4H926V867H927V866.8H928V878.3H929V880H930V898.7H931V883.4H932V882H933V867.7H934V870.4H935V868.3H936V867.7H937V866.2H938V908.7H939V909.2H940V895.4H941V892.9H942V872.6H943V866.7H944V867.6H945V870.1H946V875H947V886.3H948V875.3H949V868.9H950V902.5H951V908.1H952V907.6H953V908.1H954V904.5H955V902.3H956V889.2H957V884.7H958V884.2H959V882.6H960V889.7H961V899.6H962V910.6H963V889.2H964V885.9H965V904.8H966V917.5H967V881.3H968V882.2H969V872.8H970V865.7H971V880.1H972V881.7H973V868.6H974V870.4H975V872.8H976V868.7H977V867.1H978V868.9H979V877.9H980V908.7H981V911.2H982V920.9H983V913.7H984V930.2H985V957.5H984V969.4H983V970H982V972.3H981V977.7H980V1007.8H979V1009.4H978V1019.6H977V1020.2H976V1014.3H975V1016.1H974V1018.8H973V1005.1H972V1007.1H971V1021.8H970V1022H969V1005.1H968V998.3H967V981.3H966V982H965V978.3H964V996.7H963V973.7H962V987.5H961V991.6H960V1002.3H959V1000.9H958V1003.5H957V988.8H956V983.3H955V982H954V976.2H953V975.1H952V978.2H951V979.2H950V1018.8H949V1010.2H948V1011.8H947V1013.8H946V1016.8H945V1021H944V1020.5H943V1021.4H942V984.4H941V990H940V977.9H939V973.9H938V1021.3H937V1019.7H936V1006.6H935V1019.9H934V1016.6H933V1019H932V998.4H931V985.9H930V1004.3H929V1007.6H928V1019.4H927V1021H926V1021.2H925V1021.8H924V1011.8H923V1015.3H922V994.2H921V988H920V990.3H919V997.2H918V987H917V998.7H916V988H915V1008.6H914V1002H913V1002.7H912V1000.5H911V989.5H910V980H909V980.6H908V1000H907V1000.4H906V998.8H905V993.1H904V993.4H903V994.3H902V996.2H901V979.1H900V993.9H899V998.7H898H897V1016.2H896V1006.1H895V1002.8H894V987.5H893V1000.1H892V1001.4H891V1003.8H890V995.1H889V992.4H888V994.2H887V1005.5H886V996.3H885V1002H884V998.1H883V986.9H882V1021.4H881V1022H880V1005.4H879V969.6H878V977.7H877V981.6H876V1015.4H875V964.7H874V964.4H873V964.1H872V978.7H871V987.9H870V1006.2H869V982H868V989.2H867V999.5H866V1012.7H865V1015.8H864V1011.6H863V1019.5H862V1007.1H861V1006.3H860V1021.1H859V1010.3H858V1021.8H857V1021.9H856V1022H855V1017.2H854V1019H853V1018.9H852V1014H851V1012.6H850V1006.9H849V1009.2H848V1016H847V1015.4H846V1015.1H845V1011.7H844V1012H843V1011H842V1012.7H841V1015H840V1014.5H839V1012.7H838V1010.1H837V1018.5H836V1019H835V997.3H834V999.4H833V1012.5H832V1010.7H831V999.8H830V1001H829V996.8H828V994.8H827V996.7H826V992.5H825V989.2H824V991H823V985.3H822V984.9H821V986.1H820V989.5H819V1001.7H818V975H817V978.9H816V988.4H815V976.6H814V984.6H813V973.7H812V973H811V978.8H810V977.8H809V968.7H808V970.3H807V971.7H806V989.4H805V987.9H804V974.9H803V976.2H802V974.6H801V977.2H800V975.7H799V966.5H798V983.1H797V974.9H796V974.3H795V964.5H794V981.1H793V978.8H792V981.6H791V964.4H790V967.8H789V965.3H788V964.5H787V967.3H786V975.4H785V974.7H784V970.3H783V969.8H782V978.2H781V974.8H780V970.4H779Z"/>
<path d="M987 781.2V736.4H988V737.8H989V735.3H990V733.9H991V731.1H992V713.9H993V709.6H994V712.9H995V714.7H996V703.1H997V703.5H998V703.1H999H1000V727.8H1001V715.2H1002V707.4H1003V705.9H1004H1005V709.4H1006V718.6H1007V713.4H1008V719.8H1009H1010V716H1011V703.6H1012V703.8H1013V703.4H1014V720H1015V726.3H1016V710.2H1017V714.1H1018V712.8H1019V705.8H1020V707.1H1021V710.7H1022V711H1023V706.6H1024V704.5H1025V705H1026V705.3H1027V708.5H1028V710.1H1029V704.4H1030V704.6H1031V704.9H1032V704.6H1033V705.1H1034V705.4H1035V705H1036V705.9H1037H1038V706.3H1039V706.2H1040V723.1H1041V723.6H1042V709.4H1043V703.8H1044V704H1045V714.5H1046V716.1H1047V722.9H1048V732.4H1049V729.9H1050V716.5H1051V725.8H1052V726.8H1053V726.2H1054V718H1055V727H1056V737.3H1057V732.5H1058V736.8H1059V736.6H1060V722.1H1061V716.5H1062V709.9H1063V710.8H1064V711.4H1065V708.5H1066V721.7H1067V703.8H1068V714.7H1069V714.1H1070V709.9H1071V716.1H1072V719.4H1073V740.7H1074V746.4H1075V715H1076V703.6H1077V703.1H1078H1079V703.4H1080V703.1H1081H1082H1083H1084H1085H1086V703.6H1087H1088V716.9H1089V703.5H1090V703.3H1091V703.1H1092V703.5H1093V703.1H1094V703.3H1095V706.5H1096V706.4H1097V703.5H1098H1099V703.4H1100V720.4H1101V719.6H1102V706.5H1103V706.3H1104V706.5H1105V706.3H1106V703.1H1107V703.3H1108V703.1H1109V703.5H1110V703.4H1111H1112V703.1H1113V703.3H1114V727.2H1115V754.6H1116V764.1H1117V770.1H1118V781H1119V781.5H1118V790.3H1117V798.4H1116V805.1H1115V833.7H1114V859.4H1113H1112H1111V859H1110V859.4H1109H1108V858.9H1107V859.4H1106V856H1105V856.9H1104V846.2H1103V842.5H1102V844.9H1101V843.1H1100V859.2H1099V859.4H1098V859.1H1097V854.6H1096V848.3H1095V859.4H1094H1093H1092V859.3H1091V859.4H1090H1089H1088H1087H1086V859.2H1085V859.3H1084V858.8H1083V859.4H1082H1081H1080V859H1079V859.3H1078V859H1077V857.8H1076V849.4H1075V824.2H1074V823.1H1073V842.3H1072V845.8H1071V851.9H1070V849.6H1069V847.2H1068V858.9H1067V838.6H1066V841.5H1065V852.7H1064V850.5H1063V853.4H1062V845.4H1061V845.8H1060V826.1H1059V826.6H1058V832.4H1057V832.7H1056V835.3H1055V848.5H1054V834.4H1053V836.7H1052V834.6H1051V846.2H1050V831.2H1049V833.6H1048V844.6H1047V846.7H1046V841.5H1045V858.2H1044V859.1H1043V854.7H1042V838.7H1041V826.8H1040V856.9H1039V846.6H1038V856.4H1037V857.5H1036V845.9H1035V856.8H1034V857.8H1033V857.3H1032V858.5H1031V857.7H1030V858.3H1029V853.4H1028V850.8H1027V857.5H1026V857.8H1025V858H1024V858.9H1023V852.1H1022V850.4H1021V856.2H1020V857.2H1019V849.3H1018H1017V846H1016V835.5H1015V844.2H1014V859.4H1013V859H1012V859.4H1011V846.4H1010V843.7H1009V841.7H1008V852.5H1007V847H1006V855.6H1005V843.9H1004V856.3H1003V854.2H1002V847.4H1001V846.8H1000V859.4H999H998V859H997V859.3H996V847H995V850.4H994V850.9H993V849.1H992V828H991V828.2H990V827.4H989V824.1H988V824H987Z"/>
<path d="M987 943.9V897.8H988V896.4H989V892.8H990V900.4H991V890.8H992V876.2H993V870.9H994V873.9H995V876.1H996V876.4H997V866.2H998V865.7H999H1000V873.4H1001V876H1002V871.3H1003V868.5H1004V868.9H1005V869.6H1006V879.7H1007V871.5H1008V881.2H1009V881H1010V879.1H1011V868.1H1012V866.6H1013V866.5H1014V866.6H1015V885.2H1016V872.8H1017V875.8H1018V874.4H1019V868.1H1020V870.1H1021V872H1022V872.1H1023V867.8H1024V866.4H1025V867.1H1026V867.2H1027V873.3H1028V871.4H1029V867.2H1030H1031V881.2H1032V867.7H1033V867.4H1034V867.8H1035V868.3H1036V868.4H1037V868.2H1038V868.9H1039V869H1040V885.3H1041V882.5H1042V870.5H1043V865.8H1044V867.1H1045V878.2H1046V876.1H1047V881.3H1048V891.5H1049V892.2H1050V877.8H1051V888.6H1052V887.9H1053H1054V874.9H1055V885.9H1056V886.2H1057V905.1H1058V897.3H1059V894.5H1060V881.4H1061V880.1H1062V871.6H1063V873.3H1064V871.7H1065V868.6H1066V880.8H1067V866.6H1068V873.3H1069V876.8H1070V873.9H1071V873.8H1072V884.2H1073V896.9H1074V897.6H1075V875.4H1076V874.4H1077V865.7H1078V871.1H1079V866.2H1080V866.3H1081V865.7H1082H1083V865.8H1084V865.7H1085H1086H1087H1088V873.3H1089V865.7H1090V866H1091V865.9H1092H1093V866.1H1094V865.7H1095V868.3H1096V868H1097V866.3H1098V865.7H1099H1100V878.1H1101V880.5H1102V868.5H1103V868.9H1104V868.1H1105V868.5H1106V865.7H1107V866.1H1108V872.2H1109V866.2H1110V866H1111V865.9H1112V866H1113V866.2H1114V890.4H1115V912.1H1116V926.7H1117V934.8H1118V941.4H1119V944.1H1118V955H1117V958.9H1116V971.7H1115V981.7H1114V1008H1113V1022H1112V1021.9H1111V1021.5H1110V1022H1109V1021.9H1108V1021.8H1107V1022H1106V1018.7H1105V1019.5H1104H1103V1005.6H1102V1006.9H1101V1007.3H1100V1022H1099V1021.7H1098V1009.6H1097V1018.6H1096V1015.8H1095V1021.4H1094V1015.6H1093V1022H1092V1021.9H1091V1022H1090H1089H1088V1021.7H1087V1021.9H1086V1021.8H1085V1017.1H1084V1022H1083H1082H1081V1010H1080V1021.4H1079H1078V1022H1077V1020.7H1076V1020.1H1075V983.3H1074V986.6H1073V1006.7H1072V1009.4H1071V1014.2H1070V1013.1H1069V1013H1068V1020.4H1067V1002.6H1066V1020.1H1065V1019.2H1064V1012.6H1063V1013H1062V1007.9H1061V1009.2H1060V990.2H1059V988.8H1058V995.5H1057V998.5H1056V1012.1H1055V1009.7H1054V1000.1H1053V999.4H1052V997H1051V1012H1050V991.8H1049V995.5H1048V1005.5H1047V1008.3H1046V1008.7H1045V1020.9H1044V1022H1043H1042V1000.5H1041V1001.4H1040V1019.4H1039V1019.5H1038V1019.1H1037V1020H1036V1020.4H1035V1019.3H1034V1020.1H1033V1019.8H1032V1009.8H1031V1021H1030V1020.6H1029V1013.8H1028V1015.6H1027V1020.4H1026V1020.3H1025V1021.1H1024V1018H1023V1015.1H1022V1016.7H1021V1016.1H1020V1019.9H1019V1011.2H1018V1014.6H1017V1003.3H1016V993.4H1015V1021.2H1014V1021.5H1013V1022H1012V1018.4H1011V1008.2H1010V1006.3H1009V1005.2H1008V1016H1007V993H1006V1013.5H1005V1019.8H1004V1019.7H1003V1020.3H1002V1013H1001V1003.7H1000V1021.4H999V1022H998V1021.4H997V1011.7H996V1011.5H995V1010H994V1015.9H993V1011.2H992V990.7H991V991.2H990V991.5H989V988.9H988V987.1H987Z"/>
<path d="M1120 781.2V706.8H1121V720.1H1122V719.5H1123V703.1H1124H1125V719.3H1126V719.7H1127V703.1H1128V713.2H1129V714.6H1130V703.3H1131H1132V703.1H1133H1134V703.2H1135V703.4H1136V703.2H1137V703.1H1138H1139V712.6H1140V714.3H1141V703.5H1142V708.1H1143V710.7H1144V703.1H1145V703.2H1146V703.1H1147V703.3H1148V703.1H1149H1150H1151H1152V724.7H1153V724.9H1154V704.9H1155V705.8H1156V721H1157V722.4H1158V739.4H1159V738.2H1160V726.8H1161V735.2H1162V733.5H1163V732.9H1164V721.3H1165V719.7H1166V727.8H1167V725.9H1168V736.3H1169V736.2H1170V738.9H1171V741.4H1172V718.7H1173V735.4H1174V732.6H1175V733.4H1176V703.1H1177V703.4H1178V707.2H1179V703.3H1180V703.7H1181V704.1H1182H1183V712.5H1184V715.2H1185V713.2H1186V706.2H1187V703.1H1188H1189H1190V703.2H1191V703.3H1192V703.5H1193V703.3H1194V703.1H1195H1196H1197V703.3H1198V703.2H1199V703.1H1200V703.4H1201V703.5H1202V703.6H1203V703.1H1204H1205V729.1H1206V730.4H1207V753.1H1208V755H1209V755.4H1210V756.1H1211V756.4H1212V751.5H1213V741.7H1214V726.9H1215V703.1H1216V703.6H1217V741.9H1218V743.6H1219V747.8H1220V750.6H1221V741.6H1222V740.8H1223V740.3H1224V739.9H1225V725.2H1226V723.6H1227V703.6H1228V704.3H1229V704.4H1230V705.5H1231V705.8H1232V718.3H1233V719.3H1234V703.1H1235H1236V703.4H1237V703.3H1238V703.5H1239V703.4H1240V703.5H1241V703.4H1242V703.1H1243H1244V703.3H1245V714.6H1246V716.4H1247V703.6H1248V703.3H1249V703.1H1250V703.3H1251V703.1H1252H1253H1254V703.3H1255V703.5H1256V703.1H1257V703.6H1258V703.1H1259H1260H1261H1262V703.3H1263V703.1H1264V732.2H1265V738.7H1266V729.8H1267V743H1268V749.6H1269V753.4H1270V756.2H1271V763.4H1272V754.3H1273V755.9H1274V755H1275V755.9H1276V742.3H1277V752.5H1278V752.8H1279V750.8H1280V765.2H1281V770.6H1282V774.1H1283V781H1284V781.5H1283V788.4H1282V791.9H1281V799.2H1280V809.3H1279V811.8H1278V811.3H1277V819.4H1276V821.3H1275V807.4H1274V809.3H1273V806.1H1272V800.7H1271V807.5H1270V809.8H1269V813.6H1268V840.3H1267V820.3H1266V821.1H1265V824.1H1264V859.1H1263V859.4H1262V858.8H1261V859.2H1260V859.4H1259V858.9H1258V859.4H1257V858.9H1256V859.4H1255V858.9H1254V858.8H1253H1252V859.4H1251V859.2H1250V859.1H1249V859.4H1248V858.8H1247V848.8H1246V848.4H1245V859.4H1244H1243V858.9H1242V859.4H1241V858.8H1240V859H1239V859.4H1238V858.8H1237V846.6H1236V859.1H1235V859.4H1234V842.1H1233V843.1H1232V856.4H1231V857.8H1230V857.7H1229V859.1H1228V856.3H1227V839.3H1226V840.6H1225V823.1H1224V822.8H1223V822.7H1222V823.8H1221V811.2H1220V814.8H1219V814.9H1218V817.7H1217V859.3H1216V850.6H1215V831.8H1214V822.2H1213V810.8H1212V806H1211V807.9H1210V807.2H1209V808.1H1208V809H1207V817.6H1206V859.1H1205V858.8H1204V859.1H1203H1202V859.4H1201V859.3H1200V854.2H1199V859.3H1198H1197H1196V859.2H1195V858.9H1194V859.4H1193V858.8H1192H1191V859.4H1190H1189V859H1188V858.8H1187V857.1H1186V847.6H1185V849.6H1184V850.4H1183V857.8H1182V858.3H1181V858.1H1180V858.6H1179V855.2H1178V854.1H1177V859.2H1176V827.2H1175V828.5H1174V829.9H1173V844H1172V820.7H1171V823.2H1170V824.3H1169V825.4H1168V829.2H1167V835.3H1166V843.7H1165V838.2H1164V832H1163V828.3H1162V826.4H1161V839.1H1160V813.1H1159V824.8H1158V839.5H1157V839.1H1156V838.7H1155V856.8H1154V836.6H1153V836.4H1152V859.4H1151H1150H1149H1148H1147H1146V859H1145V859.4H1144V852.3H1143V851.2H1142V856.2H1141V849.3H1140V848.8H1139V858.9H1138H1137V859.4H1136H1135V859.1H1134V859.2H1133V859.4H1132H1131V853.1H1130V848.8H1129V847.4H1128V859.4H1127V845.4H1126V843.3H1125V859.4H1124V850.7H1123V842.7H1122V836.5H1121V858.9H1120Z"/>
<path d="M1120 943.9V865.8H1121V881.1H1122V882H1123V870.1H1124V866.1H1125V880.3H1126V878.8H1127V866.2H1128V874H1129V874.4H1130V865.7H1131H1132V865.9H1133V865.7H1134V866H1135V865.8H1136V866.3H1137V866.4H1138V865.7H1139V874H1140V874.2H1141V867.9H1142V869.8H1143V871.8H1144V865.7H1145V866.1H1146V865.7H1147V866H1148V865.8H1149V865.7H1150H1151H1152V883.5H1153V886.2H1154V867.1H1155V883.9H1156V884.2H1157V888.5H1158V898.1H1159V897.8H1160V887.9H1161V895.1H1162V895.5H1163V893.2H1164V885.7H1165V883.2H1166V888.2H1167V888.5H1168V893.8H1169V897.4H1170V897.9H1171V896.9H1172V880.2H1173V881.1H1174V895.6H1175V901.6H1176V866.2H1177V865.7H1178V874.5H1179V866.5H1180H1181V866.8H1182V866.7H1183V866.9H1184V875.8H1185V875.1H1186V866.2H1187V865.8H1188V865.7H1189V866H1190V866.1H1191H1192V866H1193V865.7H1194V866.2H1195V865.7H1196V866.3H1197V866H1198V865.7H1199V865.8H1200V865.7H1201H1202H1203H1204H1205V887.1H1206V891H1207V910.1H1208V913.6H1209V912.9H1210V912.3H1211V911.7H1212V908.3H1213V899H1214V890.5H1215V865.7H1216H1217V899.2H1218V904.1H1219V907H1220V908H1221V899.5H1222V897.3H1223V899.9H1224V897H1225V884.9H1226V883.8H1227V865.7H1228V865.9H1229V867.5H1230V867.4H1231V867.7H1232V880.8H1233V878H1234V865.8H1235H1236V865.7H1237V866.1H1238V865.7H1239V866.2H1240V865.7H1241H1242V865.9H1243V866.2H1244V865.7H1245V876.7H1246V875H1247V865.9H1248V866.3H1249V865.8H1250V865.9H1251V865.7H1252V866.3H1253V865.7H1254H1255V866.3H1256V866.2H1257V866H1258V866.4H1259V866H1260V866.2H1261V866.3H1262V866.1H1263V865.7H1264H1265V900.9H1266V892.2H1267V880.3H1268V905.7H1269V913.2H1270V915H1271V920.5H1272V916.6H1273V912.3H1274V912.5H1275V899.2H1276V899.7H1277V910.4H1278V911.7H1279V908.9H1280V925.9H1281V933.2H1282V936.7H1283V943.6H1284V944.1H1283V949.1H1282V954.5H1281V959.9H1280V972.2H1279V974.7H1278V973.5H1277V982.7H1276V982.2H1275V970.2H1274V968.1H1273V969.4H1272V961.7H1271V966.3H1270V962.9H1269V977.3H1268V980.1H1267V995.8H1266V985.6H1265V995.7H1264V1021.9H1263V1021.7H1262V1021.6H1261V1022H1260V1021.4H1259V1015.2H1258V1022H1257V1021.5H1256V1022H1255V1021.9H1254V1021.6H1253V1022H1252H1251H1250H1249V1021.4H1248V1021.9H1247V1011.7H1246V1012.2H1245V1022H1244H1243V1011.9H1242V1013.6H1241V1021.7H1240V1021.9H1239V1021.5H1238V1021.8H1237V1021.6H1236V1022H1235H1234V1006.8H1233V1007.1H1232V1018.6H1231V1020.4H1230H1229V1014.1H1228V1022H1227V1002.1H1226V1000.1H1225V983.1H1224V983.6H1223V984.5H1222V986.5H1221V975.1H1220V977.1H1219V967.6H1218V983.7H1217V1022H1216V1015.8H1215V994.5H1214V983.4H1213V976.7H1212V970.7H1211V970.6H1210V972.1H1209V969.5H1208H1207V977.6H1206V1022H1205H1204V1021.9H1203V1022H1202V1021.4H1201V1022H1200H1199H1198H1197V1021.3H1196V1022H1195V1021.7H1194V1021.8H1193V1022H1192H1191H1190V1017H1189V1022H1188V1021.6H1187V1019.5H1186V1009.7H1185V1012.6H1184V1014.5H1183V1020.5H1182V1020.6H1181V1011.9H1180V1022H1179V1016.3H1178V1017.4H1177V1008.7H1176V990.6H1175V992.7H1174V990H1173V998.9H1172V986.5H1171V984.9H1170V987.1H1169V990.4H1168V997.4H1167V995.9H1166V1002.7H1165V1003.1H1164V994.7H1163V991.5H1162V988.9H1161V1001.3H1160V985.4H1159V986.8H1158V1003.2H1157V1001.3H1156V1004.9H1155V1021.1H1154V998.1H1153V998.2H1152V1022H1151V1021.5H1150V1022H1149H1148H1147H1146V1021.4H1145V1022H1144V1016.6H1143V1017.2H1142V1022H1141V1009.6H1140V1011.1H1139V1022H1138H1137V1021.5H1136V1021.7H1135V1021.9H1134V1022H1133H1132H1131V1021.6H1130V1011.5H1129V1009.3H1128V1021.7H1127V1005.9H1126V1006.9H1125V1014.7H1124V1018.8H1123V1005H1122V1005.3H1121V1021.8H1120Z"/></g>
<rect x="12.5" y="691" width="1.6" height="322" fill="#b4142a" fill-opacity="0.92"/>
<g fill="#8e8e8e"><path d="M8.2 1006.8L22.2 1020.6V1034.6H8.2Z"/><path d="M122.1 1006.8L136.1 1020.6V1034.6H122.1Z"/><path d="M263.5 1006.8L277.5 1020.6V1034.6H263.5Z"/><path d="M354.9 1006.8L368.9 1020.6V1034.6H354.9Z"/><path d="M498.4 1006.8L512.4 1020.6V1034.6H498.4Z"/><path d="M665.5 1006.8L679.5 1020.6V1034.6H665.5Z"/><path d="M777.9 1006.8L791.9 1020.6V1034.6H777.9Z"/><path d="M985.3 1006.8L999.3 1020.6V1034.6H985.3Z"/><path d="M1118.9 1006.8L1132.9 1020.6V1034.6H1118.9Z"/></g>
</svg>
<span class="t f" style="left:3.9px;top:330px;font-size:12px;transform:translateY(-0.4px) rotate(.001deg);">1</span>
<span class="t f" style="left:117.81px;top:330px;font-size:12px;transform:translateY(-0.4px) rotate(.001deg);">1</span>
<span class="t f" style="left:259.19px;top:330px;font-size:12px;transform:translateY(-0.4px) rotate(.001deg);">1</span>
<span class="t f" style="left:350.6px;top:330px;font-size:12px;transform:translateY(-0.4px) rotate(.001deg);">1</span>
<span class="t f" style="left:494.14px;top:330px;font-size:12px;transform:translateY(-0.4px) rotate(.001deg);">1</span>
<span class="t f" style="left:661.2px;top:330px;font-size:12px;transform:translateY(-0.4px) rotate(.001deg);">1</span>
<span class="t f" style="left:773.56px;top:330px;font-size:12px;transform:translateY(-0.4px) rotate(.001deg);">1</span>
<span class="t f" style="left:981.04px;top:330px;font-size:12px;transform:translateY(-0.4px) rotate(.001deg);">1</span>
<span class="t f" style="left:1114.63px;top:330px;font-size:12px;transform:translateY(-0.4px) rotate(.001deg);">1</span>
</div>
<div id="side">
<div class="inp" style="top:101px"><span class="t c" style="left:7px;top:9px;font-size:16.6px;letter-spacing:0.756px;transform:translateY(0px) rotate(.001deg);">Fire Burning</span></div>
<div class="inp" style="top:143.4px"><span class="t c" style="left:7px;top:8.6px;font-size:16.6px;letter-spacing:0.726px;transform:translateY(0.2px) rotate(.001deg);">Hot Shots</span></div>
<div class="inp" style="top:185.8px"><span class="t c" style="left:7.7px;top:8.2px;font-size:16.6px;letter-spacing:1.335px;transform:translateY(0.4px) rotate(.001deg);">0813285908925</span></div>
<div class="btn" role="button" style="left:1389.5px;width:79.5px"><span class="t b" style="left:10.71px;top:8.5px;font-size:18.5px;transform:translateY(0px) rotate(.001deg) scaleX(0.8728);">CD Text</span></div>
<div class="btn" role="button" style="left:1478px;width:80px"><span class="t b" style="left:10.1px;top:8.5px;font-size:18.5px;letter-spacing:0.127px;transform:translateY(0px) rotate(.001deg);">Project</span></div>
<svg class="abs" width="1600" height="1153" viewBox="0 0 1600 1153">
<defs>
<linearGradient id="gLR" x1="0" y1="457" x2="0" y2="1005.5" gradientUnits="userSpaceOnUse">
<stop offset="0" stop-color="#e03030"/><stop offset="0.06" stop-color="#e46a30"/><stop offset="0.1" stop-color="#e49a30"/><stop offset="0.14" stop-color="#dcd02e"/><stop offset="0.21" stop-color="#d8d42e"/><stop offset="0.27" stop-color="#90d030"/><stop offset="0.345" stop-color="#2ed62e"/><stop offset="1" stop-color="#2ed62e"/>
</linearGradient>
<linearGradient id="gM" x1="0" y1="457" x2="0" y2="1005.5" gradientUnits="userSpaceOnUse">
<stop offset="0" stop-color="#e03030"/><stop offset="0.19" stop-color="#e03030"/><stop offset="0.23" stop-color="#e08030"/><stop offset="0.26" stop-color="#dcd02e"/><stop offset="0.305" stop-color="#d8d42e"/><stop offset="0.33" stop-color="#90d030"/><stop offset="0.36" stop-color="#2ed62e"/><stop offset="1" stop-color="#2ed62e"/>
</linearGradient>
<linearGradient id="gChk" x1="0" y1="0" x2="0" y2="1"><stop offset="0" stop-color="#6696f2"/><stop offset="1" stop-color="#3a68e0"/></linearGradient>
</defs>
<g fill="#555">
<path d="M1342.3 356.2L1358.5 348.2V364.3ZM1357.6 356.2L1374 348.2V364.3Z"/>
<rect x="1396.4" y="339.5" width="7.3" height="33.5"/><rect x="1408.8" y="339.5" width="7.3" height="33.5"/>
<path d="M1438.7 348.2L1455.3 356.2L1438.7 364.3ZM1453.3 348.2L1470.5 356.2L1453.3 364.3Z"/>
</g>
<g fill="none" stroke="#7e7e7e" stroke-width="2.7">
<path d="M1510 340.75H1521.45V373M1510 371.65H1521.45"/>
<path d="M1544 340.75H1532.6V373M1544 371.65H1532.6"/>
</g>
<path d="M1517.3 346.8L1536.2 356.3L1517.3 365.9Z" fill="#f3f1f1" stroke="#f3f1f1" stroke-width="6.4" stroke-linejoin="round"/>
<path d="M1517.3 346.8L1536.2 356.3L1517.3 365.9Z" fill="#c60000"/>
<!-- meters -->
<rect x="1398" y="422" width="8.2" height="27.8" fill="#7e1518"/>
<rect x="1413.2" y="422" width="8.6" height="27.8" fill="#7e1518"/>
<rect x="1398" y="457" width="8.2" height="548.5" fill="url(#gLR)"/>
<rect x="1413.2" y="457" width="8.6" height="548.5" fill="url(#gLR)"/>
<rect x="1478" y="457" width="8.2" height="548.5" fill="url(#gM)"/>
<rect x="1398" y="457" width="8.2" height="47" fill="#500" fill-opacity="0.62"/>
<rect x="1413.2" y="457" width="8.6" height="34.5" fill="#500" fill-opacity="0.62"/>
<rect x="1478" y="457" width="8.2" height="95.5" fill="#4a0000" fill-opacity="0.6"/>
<!-- checkbox -->
<circle cx="1404.8" cy="1078.8" r="10.6" fill="#eaf1fd"/>
<circle cx="1404.8" cy="1078.8" r="9.7" fill="url(#gChk)"/>
<path d="M1412.6 1064.6L1404.6 1081" fill="none" stroke="#c4c4c6" stroke-width="1.6"/>
<path d="M1399.3 1074.4L1404.6 1085L1414.3 1064.6" fill="none" stroke="#fff" stroke-width="2.3" stroke-linejoin="miter"/>
</svg>
<label class="t l" style="left:1345.2px;top:108px;font-size:19.1px;letter-spacing:0.462px;transform:translateY(0.4px) rotate(.001deg);">Title</label>
<label class="t l" style="left:1296.5px;top:151px;font-size:19.1px;letter-spacing:0.057px;transform:translateY(-0.4px) rotate(.001deg);">Performer</label>
<label class="t l" style="left:1343.04px;top:193px;font-size:19.1px;transform:translateY(-0.2px) rotate(.001deg) scaleX(0.9086);">MCN</label>
<label class="t l" style="left:1347.9px;top:235px;font-size:19.1px;letter-spacing:0.298px;transform:translateY(0px) rotate(.001deg);">Edit</label>
<label class="t l" style="left:1348.8px;top:276px;font-size:19.1px;transform:translateY(0.4px) rotate(.001deg) scaleX(0.9966);">Total Length</label>
<span class="t l" style="left:1466.2px;top:278px;font-size:17px;letter-spacing:0.540px;transform:translateY(0.4px) rotate(.001deg);">51:56:67</span>
<label class="t l" style="left:1424.61px;top:1070px;font-size:19.1px;transform:translateY(-0.5px) rotate(.001deg) scaleX(0.9762);">Table Locked</label>
<span class="t k" style="left:1382.9px;top:451px;font-size:14px;transform:translateY(0px) rotate(.001deg);">0</span>
<span class="t k" style="left:1370.45px;top:632px;font-size:14px;transform:translateY(0px) rotate(.001deg);">-20</span>
<span class="t k" style="left:1370.45px;top:817px;font-size:14px;transform:translateY(0.2px) rotate(.001deg);">-40</span>
<span class="t k" style="left:1370.45px;top:999px;font-size:14px;transform:translateY(0.4px) rotate(.001deg);">-60</span>
<span class="t k" style="left:1458.14px;top:451px;font-size:14px;transform:translateY(0px) rotate(.001deg);">-5</span>
<span class="t k" style="left:1451.39px;top:512px;font-size:14px;transform:translateY(-0.2px) rotate(.001deg);">-11</span>
<span class="t k" style="left:1450.45px;top:572px;font-size:14px;transform:translateY(-0.4px) rotate(.001deg);">-17</span>
<span class="t k" style="left:1450.35px;top:632px;font-size:14px;transform:translateY(0px) rotate(.001deg);">-23</span>
<span class="t k" style="left:1450.35px;top:999px;font-size:14px;transform:translateY(0.4px) rotate(.001deg);">-59</span>
<span class="t k" style="left:1456.9px;top:430px;font-size:14px;letter-spacing:0.169px;transform:translateY(0px) rotate(.001deg);">-16.0 (I)</span>
<span class="t k" style="left:1397.7px;top:1022px;font-size:14.5px;transform:translateY(0px) rotate(.001deg);">L</span>
<span class="t k" style="left:1412.5px;top:1022px;font-size:14.5px;transform:translateY(0px) rotate(.001deg);">R</span>
<span class="t k" style="left:1475.5px;top:1022px;font-size:14.5px;transform:translateY(0px) rotate(.001deg);">M</span>
</div>
<div id="foot">
<div id="slider"><div id="knob"></div></div>
<div id="time"><span class="t big" style="left:23.05px;top:6.75px;font-size:46.5px;letter-spacing:0.431px;transform:translateY(0px) rotate(.001deg);">00:09</span></div>
<span class="t l" style="left:21px;top:1128px;font-size:18.3px;letter-spacing:0.079px;transform:translateY(0px) rotate(.001deg);">Registered to Pieter Stenekes - Sonoris Audio Engineering</span>
</div>
</div>
</body>
</html>
